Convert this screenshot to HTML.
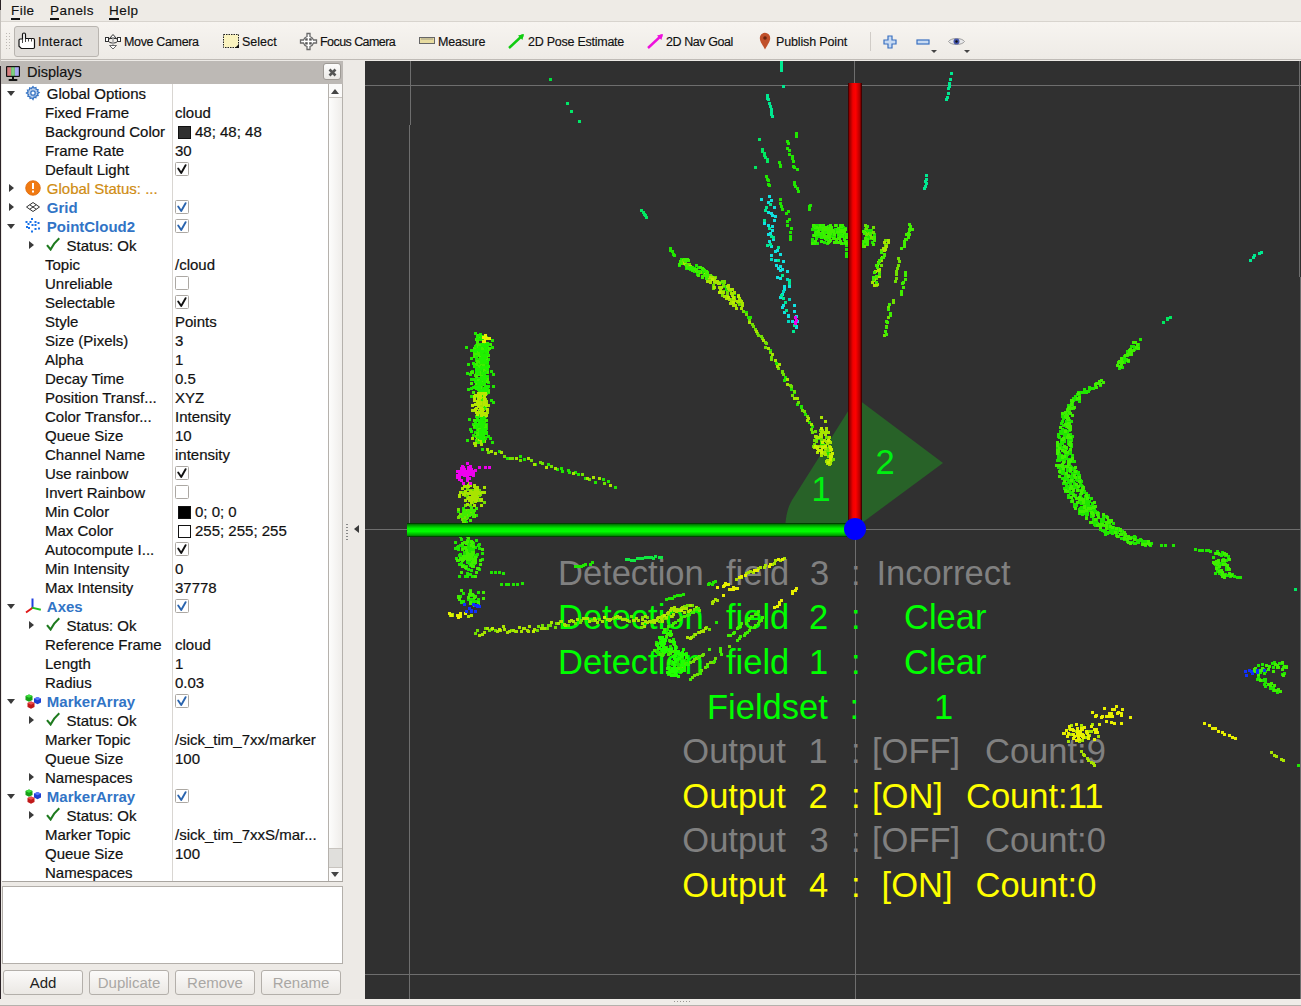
<!DOCTYPE html>
<html><head><meta charset="utf-8">
<style>
*{margin:0;padding:0;box-sizing:border-box}
html,body{width:1301px;height:1006px;overflow:hidden;background:#edeae6;font-family:"Liberation Sans",sans-serif;color:#1e1e1e;position:relative}
.abs{position:absolute}
#menubar{position:absolute;left:0;top:0;width:1301px;height:21px;background:#eeebe6}
#menubar span{position:absolute;top:3px;font-size:13.5px;letter-spacing:0.45px;color:#111;-webkit-text-stroke:0.15px #111}
#menubar u{text-decoration:none;border-bottom:2px solid #111;}
#toolbar{position:absolute;left:0;top:21px;width:1301px;height:39px;background:linear-gradient(#f7f4f0,#eeebe6);border-top:1px solid #d8d4ce;border-bottom:1px solid #bfbbb6}
.tb{position:absolute;top:13px;font-size:12.5px;color:#111;white-space:nowrap;-webkit-text-stroke:0.15px #111}
.tbi{position:absolute}
#hdr{position:absolute;left:1px;top:61px;width:342px;height:23px;background:#bdb9b5}
#tree{position:absolute;left:2px;top:84px;width:341px;height:798px;background:#fff;overflow:hidden;border-bottom:1px solid #a9a5a0}
.row{position:absolute;left:0;width:326px;height:19px}
.lbl{position:absolute;top:1px;font-size:15px;white-space:nowrap;color:#111;-webkit-text-stroke:0.2px #111}
.lbl.blue{color:#3174c6;font-weight:bold;-webkit-text-stroke:0}
.lbl.orange{color:#cf8c12;-webkit-text-stroke:0.2px #cf8c12}
.tdown{position:absolute;top:7px;width:0;height:0;border-left:4.5px solid transparent;border-right:4.5px solid transparent;border-top:5px solid #3a3a3a}
.tright{position:absolute;top:5px;width:0;height:0;border-top:4.5px solid transparent;border-bottom:4.5px solid transparent;border-left:5px solid #3a3a3a}
.ic{position:absolute;top:1px}
.val{position:absolute;left:173px;top:2px}
.cb{position:absolute;left:0;top:0;width:14px;height:14px;border:1px solid #aca8a3;background:#fff;border-radius:1.5px}
.swatch{position:absolute;left:176px;top:4px;width:13px;height:13px;border:1px solid #111}
#vline{position:absolute;left:170px;top:0;width:1px;height:798px;background:#d9d6d2}
#sb{position:absolute;left:326px;top:0;width:15px;height:797px;background:linear-gradient(90deg,#fdfdfc,#efedea);border-left:1px solid #b5b1ac;border-right:1px solid #b5b1ac}
.btn{position:absolute;top:970px;height:25px;border:1px solid #b3afaa;border-radius:3px;background:linear-gradient(#fbfaf9,#ebe8e4);font-size:15px;text-align:center;line-height:23px;color:#1e1e1e}
.btn.dis{color:#a9a7a4}
#view{position:absolute;left:365px;top:61px;width:936px;height:938px;background:#303030;overflow:hidden}
.ov{position:absolute;font-size:33px;white-space:nowrap;line-height:1}
.g{color:#00ff00}.y{color:#ffff00}.gr{color:#808080}
</style></head><body>
<div id="menubar">
 <span style="left:11px"><u>F</u>ile</span>
 <span style="left:50px"><u>P</u>anels</span>
 <span style="left:109px"><u>H</u>elp</span>
</div>
<div id="toolbar">
 <div class="abs" style="left:5px;top:10px;width:6px;height:18px;background-image:radial-gradient(circle at 1.5px 1.5px,#bdb9b4 0.8px,transparent 0.9px);background-size:3px 3px"></div>
 <div class="abs" style="left:14px;top:4px;width:85px;height:31px;border:1px solid #b9b5b0;border-radius:3px;background:#e0ddd9"></div>
 <svg class="tbi" style="left:18px;top:10px" width="18" height="18" viewBox="18 32 18 18"><path d="M22.5 39V34.5Q22.5 33 24 33Q25.5 33 25.5 34.5V38.5H28.5V38.5H31.5H33.3Q34.5 38.5 34.5 40V47.3Q34.5 48.5 33.3 48.5H21.3L19 46.3V40.2Q19 39 20.2 39Z" fill="#fff" stroke="#111" stroke-width="1.2"/><path d="M22.5 39v4M25.5 38.5v3.5M28.5 38.5v3M31.5 38.5v3" stroke="#333" stroke-width="0.9"/></svg>
 <span class="tb" style="left:38px;letter-spacing:.33px">Interact</span>
 <svg class="tbi" style="left:104px;top:11px" width="18" height="17" viewBox="104 33 18 17"><path d="M113 34.5L116.5 38.5H109.5Z" fill="#fff" stroke="#333" stroke-width="1"/><rect x="105.5" y="37.5" width="3" height="4" fill="#fff" stroke="#333"/><rect x="117.5" y="37.5" width="3" height="4" fill="#fff" stroke="#333"/><ellipse cx="113" cy="40.5" rx="4.5" ry="2.5" fill="none" stroke="#333"/><path d="M113 38v7" stroke="#aaa" stroke-width="1.5"/><path d="M109.5 45.5h7L113 49z" fill="#fff" stroke="#666"/></svg>
 <span class="tb" style="left:124px;letter-spacing:-.35px">Move Camera</span>
 <svg class="tbi" style="left:223px;top:12px" width="17" height="15" viewBox="0 0 17 15"><rect x=".5" y=".5" width="15" height="13" fill="#faf3bf" stroke="#222" stroke-dasharray="1.5 1" stroke-width="1"/><path d="M16 10v4h-4z" fill="#111"/></svg>
 <span class="tb" style="left:242px">Select</span>
 <svg class="tbi" style="left:299px;top:10px" width="19" height="19" viewBox="299 32 19 19"><path d="M307 33.5h3v3a5.5 5.5 0 0 1 3.5 3.5h3v3h-3a5.5 5.5 0 0 1-3.5 3.5v3h-3v-3a5.5 5.5 0 0 1-3.5-3.5h-3v-3h3a5.5 5.5 0 0 1 3.5-3.5z" fill="#fff" stroke="#6a6a6a" stroke-width="1.3"/><g fill="#555"><rect x="305.2" y="38.3" width="2.5" height="2.3"/><rect x="309.2" y="38.3" width="2.5" height="2.3"/><rect x="305.2" y="42.2" width="2.5" height="2.3"/><rect x="309.2" y="42.2" width="2.5" height="2.3"/></g></svg>
 <span class="tb" style="left:320px;letter-spacing:-.56px">Focus Camera</span>
 <svg class="tbi" style="left:419px;top:15px" width="16" height="8" viewBox="0 0 16 8"><rect x=".5" y=".5" width="15" height="6" fill="#e8dca0" stroke="#666"/><path d="M3 1v2M5 1v2M7 1v2M9 1v2M11 1v2M13 1v2" stroke="#777" stroke-width=".6"/></svg>
 <span class="tb" style="left:438px;letter-spacing:-.2px">Measure</span>
 <svg class="tbi" style="left:508px;top:11px" width="17" height="16" viewBox="0 0 17 16"><path d="M1 15L15 2" stroke="#11cc11" stroke-width="2.4"/><path d="M16 1l-6 1.6 4.4 4.4z" fill="#11cc11"/></svg>
 <span class="tb" style="left:528px;letter-spacing:-.25px">2D Pose Estimate</span>
 <svg class="tbi" style="left:647px;top:11px" width="17" height="16" viewBox="0 0 17 16"><path d="M1 15L15 2" stroke="#ee11dd" stroke-width="2.4"/><path d="M16 1l-6 1.6 4.4 4.4z" fill="#ee11dd"/></svg>
 <span class="tb" style="left:666px;letter-spacing:-.42px">2D Nav Goal</span>
 <svg class="tbi" style="left:759px;top:10px" width="12" height="18" viewBox="0 0 12 18"><path d="M6 17.5C3 12 .8 9.5.8 6a5.2 5.2 0 0 1 10.4 0c0 3.5-2.2 6-5.2 11.5z" fill="#c0502a"/><circle cx="6" cy="6" r="1.8" fill="#6a2510"/></svg>
 <span class="tb" style="left:776px;letter-spacing:-.14px">Publish Point</span>
 <div class="abs" style="left:870px;top:10px;width:1px;height:19px;background:#d0ccc7"></div>
 <svg class="tbi" style="left:883px;top:13px" width="14" height="14" viewBox="0 0 14 14"><path d="M5 1h4v4h4v4H9v4H5V9H1V5h4z" fill="#c9dbf2" stroke="#3a70c0" stroke-width="1.2"/></svg>
 <svg class="tbi" style="left:916px;top:17px" width="14" height="6" viewBox="0 0 14 6"><rect x="1" y="1" width="12" height="4" fill="#c9dbf2" stroke="#3a70c0" stroke-width="1.2"/></svg>
 <div class="abs" style="left:931px;top:28px;width:0;height:0;border-left:3px solid transparent;border-right:3px solid transparent;border-top:3px solid #444"></div>
 <svg class="tbi" style="left:948px;top:14px" width="17" height="11" viewBox="0 0 17 11"><path d="M.5 5.5C3 1.5 14 1.5 16.5 5.5 14 9.5 3 9.5 .5 5.5z" fill="#e8e8ea" stroke="#888" stroke-width=".8"/><circle cx="8.5" cy="5.5" r="3" fill="#4455aa"/><circle cx="8.5" cy="5.5" r="1.2" fill="#111"/></svg>
 <div class="abs" style="left:964px;top:28px;width:0;height:0;border-left:3px solid transparent;border-right:3px solid transparent;border-top:3px solid #444"></div>
</div>

<div id="hdr">
 <svg class="abs" style="left:4px;top:4px" width="16" height="17" viewBox="0 0 16 17"><rect x="1" y="1" width="14" height="11" rx="1" fill="#111"/><rect x="2.2" y="2.2" width="3.9" height="8.6" fill="#d77f80"/><rect x="6.1" y="2.2" width="3.8" height="8.6" fill="#7fcf7f"/><rect x="9.9" y="2.2" width="3.9" height="8.6" fill="#a8a8f2"/><rect x="7" y="12" width="2" height="2" fill="#111"/><rect x="3.5" y="14" width="9" height="2" rx="1" fill="#111"/></svg>
 <span class="abs" style="left:26px;top:3px;font-size:14.5px;color:#111;-webkit-text-stroke:0.15px #111">Displays</span>
 <div class="abs" style="left:322px;top:2px;width:18px;height:17px;border:1px solid #9e9a95;border-radius:3px;background:linear-gradient(#fdfdfc,#ebe9e6)"></div>
 <svg class="abs" style="left:327px;top:7px" width="9" height="9" viewBox="0 0 9 9"><path d="M1.5 1.5l6 6M7.5 1.5l-6 6" stroke="#555" stroke-width="2.6"/></svg>
</div>
<div id="tree">
<div id="vline"></div>
<div class="row" style="top:0px"><span class="tdown" style="left:5px"></span><span class="ic" style="left:23px"><svg width="16" height="16" viewBox="0 0 16 16"><g fill="none" stroke="#3a76c4" stroke-width="1.3"><path d="M8 1.5l1.1 1.6 1.8-.6.3 1.9 1.9.3-.6 1.8 1.6 1.1-1.6 1.1.6 1.8-1.9.3-.3 1.9-1.8-.6L8 14.5l-1.1-1.6-1.8.6-.3-1.9-1.9-.3.6-1.8L1.5 8l1.6-1.1-.6-1.8 1.9-.3.3-1.9 1.8.6z" fill="#b8cdea"/><circle cx="8" cy="8" r="2.2" fill="#fff"/></g></svg></span><span class="lbl" style="left:44.8px">Global Options</span></div>
<div class="row" style="top:19px"><span class="lbl" style="left:43px">Fixed Frame</span><span class="lbl" style="left:173px">cloud</span></div>
<div class="row" style="top:38px"><span class="lbl" style="left:43px">Background Color</span><span class="swatch" style="background:#303030"></span><span class="lbl" style="left:193px">48; 48; 48</span></div>
<div class="row" style="top:57px"><span class="lbl" style="left:43px">Frame Rate</span><span class="lbl" style="left:173px">30</span></div>
<div class="row" style="top:76px"><span class="lbl" style="left:43px">Default Light</span><span class="val"><span class="cb"><svg width="14" height="14" viewBox="0 0 14 14" style="position:absolute;left:-1px;top:-1px"><path d="M3.2 6.5L6.2 11L10.6 3.2" fill="none" stroke="#111" stroke-width="1.9" stroke-linecap="round" stroke-linejoin="round"/></svg></span></span></div>
<div class="row" style="top:95px"><span class="tright" style="left:7px"></span><span class="ic" style="left:23px"><svg width="16" height="16" viewBox="0 0 16 16"><circle cx="8" cy="8" r="7.3" fill="#f07a12" stroke="#e06a08" stroke-width="0.8"/><rect x="7" y="3" width="2" height="6" fill="#fff"/><rect x="7" y="10.5" width="2" height="2" fill="#fff"/></svg></span><span class="lbl orange" style="left:44.8px">Global Status: ...</span></div>
<div class="row" style="top:114px"><span class="tright" style="left:7px"></span><span class="ic" style="left:23px"><svg width="16" height="12" viewBox="0 0 16 12"><g fill="none" stroke="#333" stroke-width="1"><path d="M8 1.5L14.5 6 8 10.5 1.5 6z"/><path d="M4.75 3.75L11.25 8.25M11.25 3.75L4.75 8.25"/></g></svg></span><span class="lbl blue" style="left:44.8px">Grid</span><span class="val"><span class="cb"><svg width="14" height="14" viewBox="0 0 14 14" style="position:absolute;left:-1px;top:-1px"><path d="M3.2 6.5L6.2 11L10.6 3.2" fill="none" stroke="#2a64ae" stroke-width="1.9" stroke-linecap="round" stroke-linejoin="round"/></svg></span></span></div>
<div class="row" style="top:133px"><span class="tdown" style="left:5px"></span><span class="ic" style="left:23px"><svg width="16" height="16" viewBox="0 0 16 16"><g fill="#1a73e8"><rect x="6" y="0" width="2" height="2"/><rect x="0.5" y="3" width="2" height="2"/><rect x="4.5" y="3" width="2" height="2"/><rect x="9.5" y="3" width="2" height="2"/><rect x="12.5" y="4" width="2" height="2"/><rect x="2.5" y="5" width="2" height="2"/><rect x="6.5" y="6" width="2" height="2"/><rect x="9.5" y="6" width="2" height="2"/><rect x="1" y="8" width="2" height="2"/><rect x="3" y="9" width="2" height="2"/><rect x="9.5" y="10" width="2" height="2"/><rect x="13" y="9.5" width="2" height="2"/><rect x="6" y="12.5" width="2" height="2"/></g></svg></span><span class="lbl blue" style="left:44.8px">PointCloud2</span><span class="val"><span class="cb"><svg width="14" height="14" viewBox="0 0 14 14" style="position:absolute;left:-1px;top:-1px"><path d="M3.2 6.5L6.2 11L10.6 3.2" fill="none" stroke="#2a64ae" stroke-width="1.9" stroke-linecap="round" stroke-linejoin="round"/></svg></span></span></div>
<div class="row" style="top:152px"><span class="tright" style="left:27px"></span><span class="ic" style="left:43.5px"><svg width="14" height="14" viewBox="0 0 14 14"><path d="M1 8.2l3.6 4.3C7 8 9.5 4.5 13.3 1.3" fill="none" stroke="#1e7a1e" stroke-width="2.1"/></svg></span><span class="lbl" style="left:64.5px">Status: Ok</span></div>
<div class="row" style="top:171px"><span class="lbl" style="left:43px">Topic</span><span class="lbl" style="left:173px">/cloud</span></div>
<div class="row" style="top:190px"><span class="lbl" style="left:43px">Unreliable</span><span class="val"><span class="cb"></span></span></div>
<div class="row" style="top:209px"><span class="lbl" style="left:43px">Selectable</span><span class="val"><span class="cb"><svg width="14" height="14" viewBox="0 0 14 14" style="position:absolute;left:-1px;top:-1px"><path d="M3.2 6.5L6.2 11L10.6 3.2" fill="none" stroke="#111" stroke-width="1.9" stroke-linecap="round" stroke-linejoin="round"/></svg></span></span></div>
<div class="row" style="top:228px"><span class="lbl" style="left:43px">Style</span><span class="lbl" style="left:173px">Points</span></div>
<div class="row" style="top:247px"><span class="lbl" style="left:43px">Size (Pixels)</span><span class="lbl" style="left:173px">3</span></div>
<div class="row" style="top:266px"><span class="lbl" style="left:43px">Alpha</span><span class="lbl" style="left:173px">1</span></div>
<div class="row" style="top:285px"><span class="lbl" style="left:43px">Decay Time</span><span class="lbl" style="left:173px">0.5</span></div>
<div class="row" style="top:304px"><span class="lbl" style="left:43px">Position Transf...</span><span class="lbl" style="left:173px">XYZ</span></div>
<div class="row" style="top:323px"><span class="lbl" style="left:43px">Color Transfor...</span><span class="lbl" style="left:173px">Intensity</span></div>
<div class="row" style="top:342px"><span class="lbl" style="left:43px">Queue Size</span><span class="lbl" style="left:173px">10</span></div>
<div class="row" style="top:361px"><span class="lbl" style="left:43px">Channel Name</span><span class="lbl" style="left:173px">intensity</span></div>
<div class="row" style="top:380px"><span class="lbl" style="left:43px">Use rainbow</span><span class="val"><span class="cb"><svg width="14" height="14" viewBox="0 0 14 14" style="position:absolute;left:-1px;top:-1px"><path d="M3.2 6.5L6.2 11L10.6 3.2" fill="none" stroke="#111" stroke-width="1.9" stroke-linecap="round" stroke-linejoin="round"/></svg></span></span></div>
<div class="row" style="top:399px"><span class="lbl" style="left:43px">Invert Rainbow</span><span class="val"><span class="cb"></span></span></div>
<div class="row" style="top:418px"><span class="lbl" style="left:43px">Min Color</span><span class="swatch" style="background:#000000"></span><span class="lbl" style="left:193px">0; 0; 0</span></div>
<div class="row" style="top:437px"><span class="lbl" style="left:43px">Max Color</span><span class="swatch" style="background:#ffffff"></span><span class="lbl" style="left:193px">255; 255; 255</span></div>
<div class="row" style="top:456px"><span class="lbl" style="left:43px">Autocompute I...</span><span class="val"><span class="cb"><svg width="14" height="14" viewBox="0 0 14 14" style="position:absolute;left:-1px;top:-1px"><path d="M3.2 6.5L6.2 11L10.6 3.2" fill="none" stroke="#111" stroke-width="1.9" stroke-linecap="round" stroke-linejoin="round"/></svg></span></span></div>
<div class="row" style="top:475px"><span class="lbl" style="left:43px">Min Intensity</span><span class="lbl" style="left:173px">0</span></div>
<div class="row" style="top:494px"><span class="lbl" style="left:43px">Max Intensity</span><span class="lbl" style="left:173px">37778</span></div>
<div class="row" style="top:513px"><span class="tdown" style="left:5px"></span><span class="ic" style="left:23px"><svg width="18" height="17" viewBox="0 0 18 17"><path d="M7.5 0.5V10" stroke="#1f3fe0" stroke-width="2"/><path d="M8 9.5L1 14.5" stroke="#e01818" stroke-width="2"/><path d="M7 9.6L15.8 11.8" stroke="#20c020" stroke-width="2"/></svg></span><span class="lbl blue" style="left:44.8px">Axes</span><span class="val"><span class="cb"><svg width="14" height="14" viewBox="0 0 14 14" style="position:absolute;left:-1px;top:-1px"><path d="M3.2 6.5L6.2 11L10.6 3.2" fill="none" stroke="#2a64ae" stroke-width="1.9" stroke-linecap="round" stroke-linejoin="round"/></svg></span></span></div>
<div class="row" style="top:532px"><span class="tright" style="left:27px"></span><span class="ic" style="left:43.5px"><svg width="14" height="14" viewBox="0 0 14 14"><path d="M1 8.2l3.6 4.3C7 8 9.5 4.5 13.3 1.3" fill="none" stroke="#1e7a1e" stroke-width="2.1"/></svg></span><span class="lbl" style="left:64.5px">Status: Ok</span></div>
<div class="row" style="top:551px"><span class="lbl" style="left:43px">Reference Frame</span><span class="lbl" style="left:173px">cloud</span></div>
<div class="row" style="top:570px"><span class="lbl" style="left:43px">Length</span><span class="lbl" style="left:173px">1</span></div>
<div class="row" style="top:589px"><span class="lbl" style="left:43px">Radius</span><span class="lbl" style="left:173px">0.03</span></div>
<div class="row" style="top:608px"><span class="tdown" style="left:5px"></span><span class="ic" style="left:23px"><svg width="18" height="18" viewBox="0 0 18 18"><path d="M4 1.5l3.5 1.6v4L4 8.7 0.5 7.1v-4z" fill="#17a017"/><path d="M0.5 3.1L4 4.7l3.5-1.6L4 1.5z" fill="#3ee03e"/><path d="M12.5 4l3.5 1.6v4l-3.5 1.6L9 9.6v-4z" fill="#1f3fd0"/><path d="M9 5.6l3.5 1.6L16 5.6 12.5 4z" fill="#5a78ff"/><path d="M6 8.5l3.5 1.6v4L6 15.7l-3.5-1.6v-4z" fill="#c01818"/><path d="M2.5 10.1L6 11.7l3.5-1.6L6 8.5z" fill="#f05050"/></svg></span><span class="lbl blue" style="left:44.8px">MarkerArray</span><span class="val"><span class="cb"><svg width="14" height="14" viewBox="0 0 14 14" style="position:absolute;left:-1px;top:-1px"><path d="M3.2 6.5L6.2 11L10.6 3.2" fill="none" stroke="#2a64ae" stroke-width="1.9" stroke-linecap="round" stroke-linejoin="round"/></svg></span></span></div>
<div class="row" style="top:627px"><span class="tright" style="left:27px"></span><span class="ic" style="left:43.5px"><svg width="14" height="14" viewBox="0 0 14 14"><path d="M1 8.2l3.6 4.3C7 8 9.5 4.5 13.3 1.3" fill="none" stroke="#1e7a1e" stroke-width="2.1"/></svg></span><span class="lbl" style="left:64.5px">Status: Ok</span></div>
<div class="row" style="top:646px"><span class="lbl" style="left:43px">Marker Topic</span><span class="lbl" style="left:173px">/sick_tim_7xx/marker</span></div>
<div class="row" style="top:665px"><span class="lbl" style="left:43px">Queue Size</span><span class="lbl" style="left:173px">100</span></div>
<div class="row" style="top:684px"><span class="tright" style="left:27px"></span><span class="lbl" style="left:43px">Namespaces</span></div>
<div class="row" style="top:703px"><span class="tdown" style="left:5px"></span><span class="ic" style="left:23px"><svg width="18" height="18" viewBox="0 0 18 18"><path d="M4 1.5l3.5 1.6v4L4 8.7 0.5 7.1v-4z" fill="#17a017"/><path d="M0.5 3.1L4 4.7l3.5-1.6L4 1.5z" fill="#3ee03e"/><path d="M12.5 4l3.5 1.6v4l-3.5 1.6L9 9.6v-4z" fill="#1f3fd0"/><path d="M9 5.6l3.5 1.6L16 5.6 12.5 4z" fill="#5a78ff"/><path d="M6 8.5l3.5 1.6v4L6 15.7l-3.5-1.6v-4z" fill="#c01818"/><path d="M2.5 10.1L6 11.7l3.5-1.6L6 8.5z" fill="#f05050"/></svg></span><span class="lbl blue" style="left:44.8px">MarkerArray</span><span class="val"><span class="cb"><svg width="14" height="14" viewBox="0 0 14 14" style="position:absolute;left:-1px;top:-1px"><path d="M3.2 6.5L6.2 11L10.6 3.2" fill="none" stroke="#2a64ae" stroke-width="1.9" stroke-linecap="round" stroke-linejoin="round"/></svg></span></span></div>
<div class="row" style="top:722px"><span class="tright" style="left:27px"></span><span class="ic" style="left:43.5px"><svg width="14" height="14" viewBox="0 0 14 14"><path d="M1 8.2l3.6 4.3C7 8 9.5 4.5 13.3 1.3" fill="none" stroke="#1e7a1e" stroke-width="2.1"/></svg></span><span class="lbl" style="left:64.5px">Status: Ok</span></div>
<div class="row" style="top:741px"><span class="lbl" style="left:43px">Marker Topic</span><span class="lbl" style="left:173px">/sick_tim_7xxS/mar...</span></div>
<div class="row" style="top:760px"><span class="lbl" style="left:43px">Queue Size</span><span class="lbl" style="left:173px">100</span></div>
<div class="row" style="top:779px"><span class="lbl" style="left:43px">Namespaces</span></div>
<div id="sb">
 <div class="abs" style="left:0;top:0;width:13px;height:14px;background:#fbfaf9;border-bottom:1px solid #c8c4bf"></div>
 <div class="abs" style="left:2px;top:5px;width:0;height:0;border-left:4.5px solid transparent;border-right:4.5px solid transparent;border-bottom:5px solid #444"></div>
 <div class="abs" style="left:0;top:764px;width:13px;height:19px;background:#e0dfdc;border-top:1px solid #c8c4bf"></div>
 <div class="abs" style="left:0;top:783px;width:13px;height:14px;background:#fbfaf9;border-top:1px solid #c8c4bf"></div>
 <div class="abs" style="left:2px;top:788px;width:0;height:0;border-left:4.5px solid transparent;border-right:4.5px solid transparent;border-top:5px solid #444"></div>
</div>
</div>
<div class="abs" style="left:171px;top:882px;width:12px;height:2px;background-image:radial-gradient(#aaa 0.6px,transparent 0.7px);background-size:2px 2px"></div>
<div class="abs" style="left:2px;top:886px;width:341px;height:78px;background:#fff;border:1px solid #b3afaa"></div>
<div class="btn" style="left:3px;width:80px">Add</div>
<div class="btn dis" style="left:89px;width:80px">Duplicate</div>
<div class="btn dis" style="left:175px;width:80px">Remove</div>
<div class="btn dis" style="left:261px;width:80px">Rename</div>

<div class="abs" style="left:346px;top:523px;width:2px;height:17px;background-image:radial-gradient(#888 0.6px,transparent 0.7px);background-size:2px 3px"></div>
<div class="abs" style="left:354px;top:525px;width:0;height:0;border-top:4.5px solid transparent;border-bottom:4.5px solid transparent;border-right:5px solid #3a3a3a"></div>
<div class="abs" style="left:0;top:66px;width:1px;height:940px;background:#2a2226"></div><div class="abs" style="left:0;top:0;width:1px;height:10px;background:#2a2226"></div><div class="abs" style="left:0;top:10px;width:1px;height:56px;background:#c4c0bb"></div>

<div id="view">
<svg width="936" height="938" style="position:absolute;left:0;top:0">
 <g fill="#6e6e6e">
  <rect x="45" y="0" width="1" height="64"/><rect x="44" y="64" width="1" height="874"/>
  <rect x="489" y="0" width="1" height="30"/><rect x="490" y="30" width="1" height="908"/>
  <rect x="934" y="0" width="1" height="216"/><rect x="935" y="216" width="1" height="722"/>
  <rect x="0" y="24" width="936" height="1"/>
  <rect x="0" y="468" width="936" height="1"/>
  <rect x="0" y="913" width="936" height="1"/>
 </g>
<defs>
  <linearGradient id="rg" x1="0" x2="1" y1="0" y2="0"><stop offset="0" stop-color="#200000"/><stop offset="0.1" stop-color="#900000"/><stop offset="0.35" stop-color="#f00000"/><stop offset="0.55" stop-color="#ff0000"/><stop offset="0.85" stop-color="#b00000"/><stop offset="1" stop-color="#200000"/></linearGradient>
  <linearGradient id="gg" x1="0" x2="0" y1="0" y2="1"><stop offset="0" stop-color="#002000"/><stop offset="0.12" stop-color="#008800"/><stop offset="0.38" stop-color="#00f000"/><stop offset="0.6" stop-color="#00ff00"/><stop offset="0.88" stop-color="#00a000"/><stop offset="1" stop-color="#002000"/></linearGradient>
 </defs>
 <g transform="translate(-365,-61)">
  <path d="M855 397L943 463L855 528Z" fill="#286228"/>
  <path d="M857 397L794 497C789 504 786.5 512 785.5 523L857 523Z" fill="#286228"/>
  <g font-family="Liberation Sans" font-size="34.5" fill="#00f010">
   <text x="811.6" y="500.8">1</text><text x="875.5" y="473.8">2</text>
  </g>
  <g font-family="Liberation Sans" font-size="34.5">
   <g fill="#808080"><text x="558" y="585.2">Detection</text><text x="726" y="585.2">field</text><text x="810" y="585.2">3</text><text x="851" y="585.2">:</text><text x="876.4" y="585.2">Incorrect</text></g>
   <g fill="#00ff00"><text x="558" y="629.2">Detection</text><text x="726" y="629.2">field</text><text x="809" y="629.2">2</text><text x="851" y="629.2">:</text><text x="904" y="629.2">Clear</text></g>
   <g fill="#00ff00"><text x="558" y="673.6">Detection</text><text x="726" y="673.6">field</text><text x="809" y="673.6">1</text><text x="851" y="673.6">:</text><text x="904" y="673.6">Clear</text></g>
   <g fill="#00ff00"><text x="707" y="718.5">Fieldset</text><text x="849.6" y="718.5">:</text><text x="934" y="718.5">1</text></g>
   <g fill="#808080"><text x="682.3" y="763">Output</text><text x="808.6" y="763">1</text><text x="851" y="763">:</text><text x="872" y="763">[OFF]</text><text x="985" y="763">Count:9</text></g>
   <g fill="#ffff00"><text x="682.3" y="807.7">Output</text><text x="808.6" y="807.7">2</text><text x="851" y="807.7">:</text><text x="872" y="807.7">[ON]</text><text x="966" y="807.7">Count:11</text></g>
   <g fill="#808080"><text x="682.3" y="852.2">Output</text><text x="809.6" y="852.2">3</text><text x="851" y="852.2">:</text><text x="872" y="852.2">[OFF]</text><text x="985" y="852.2">Count:0</text></g>
   <g fill="#ffff00"><text x="682.3" y="896.9">Output</text><text x="809" y="896.9">4</text><text x="851" y="896.9">:</text><text x="881.6" y="896.9">[ON]</text><text x="975.5" y="896.9">Count:0</text></g>
  </g>
 </g>
 <path fill="#00e040" d="M184 17h3v3h-3z"/>
<path fill="#00e868" d="M201 41h3v3h-3zM205 49h3v3h-3zM213 59h3v3h-3z"/>
<path fill="#00e860" d="M275 148h3v3h-3zM277 150h3v3h-3zM278 152h3v3h-3zM279 153h3v3h-3zM280 155h3v3h-3zM393 77h3v3h-3zM389 105h3v3h-3zM396 87h3v3h-3zM396 89h3v3h-3zM398 91h3v3h-3zM398 93h3v3h-3zM399 95h3v3h-3zM401 97h3v3h-3zM401 99h3v3h-3zM797 260h3v3h-3zM801 257h3v3h-3zM801 256h3v3h-3zM804 255h3v3h-3zM929 527h3v3h-3z"/>
<path fill="#20e600" d="M304 186h3v3h-3zM304 188h3v3h-3zM306 189h3v3h-3zM307 192h3v3h-3zM308 193h3v3h-3zM326 205h3v3h-3zM328 206h3v3h-3zM332 209h3v3h-3zM337 210h3v3h-3zM341 214h3v3h-3zM345 214h3v3h-3zM355 220h3v3h-3zM357 223h3v3h-3zM358 224h3v3h-3zM360 227h3v3h-3zM362 227h3v3h-3zM368 231h3v3h-3zM380 250h3v3h-3zM382 255h3v3h-3zM384 255h3v3h-3zM404 288h3v3h-3zM410 301h3v3h-3zM419 315h3v3h-3zM418 318h3v3h-3zM425 327h3v3h-3zM428 330h3v3h-3zM431 342h3v3h-3zM435 344h3v3h-3zM435 345h3v3h-3zM439 352h3v3h-3zM443 360h3v3h-3zM446 364h3v3h-3zM453 376h3v3h-3zM455 381h3v3h-3zM457 382h3v3h-3zM462 389h3v3h-3zM461 392h3v3h-3zM463 394h3v3h-3zM315 197h3v3h-3zM313 203h3v3h-3zM318 199h3v3h-3zM317 200h3v3h-3zM319 202h3v3h-3zM320 204h3v3h-3zM320 206h3v3h-3zM323 205h3v3h-3zM323 206h3v3h-3zM324 207h3v3h-3zM325 206h3v3h-3zM326 206h3v3h-3zM327 206h3v3h-3zM330 203h3v3h-3zM329 207h3v3h-3zM328 209h3v3h-3zM330 209h3v3h-3zM332 205h3v3h-3zM331 212h3v3h-3zM334 209h3v3h-3zM336 209h3v3h-3zM341 210h3v3h-3zM341 215h3v3h-3zM430 71h3v3h-3zM430 72h3v3h-3zM430 74h3v3h-3zM421 79h3v3h-3zM422 81h3v3h-3zM421 86h3v3h-3zM423 88h3v3h-3zM423 92h3v3h-3zM426 94h3v3h-3zM426 96h3v3h-3zM427 99h3v3h-3zM427 104h3v3h-3zM428 105h3v3h-3zM431 107h3v3h-3zM413 100h3v3h-3zM414 103h3v3h-3zM414 104h3v3h-3zM400 114h3v3h-3zM401 117h3v3h-3zM402 118h3v3h-3zM402 122h3v3h-3zM403 123h3v3h-3zM428 120h3v3h-3zM428 122h3v3h-3zM429 124h3v3h-3zM431 126h3v3h-3zM432 129h3v3h-3zM444 143h3v3h-3zM443 144h3v3h-3zM443 147h3v3h-3zM414 137h3v3h-3zM414 141h3v3h-3zM415 144h3v3h-3zM416 147h3v3h-3zM422 149h3v3h-3zM420 151h3v3h-3zM423 157h3v3h-3zM421 159h3v3h-3zM421 163h3v3h-3zM425 166h3v3h-3zM424 170h3v3h-3zM424 174h3v3h-3zM424 177h3v3h-3zM458 175h3v3h-3zM462 177h3v3h-3zM473 173h3v3h-3zM467 168h3v3h-3zM464 172h3v3h-3zM467 175h3v3h-3zM462 164h3v3h-3zM454 174h3v3h-3zM453 164h3v3h-3zM458 173h3v3h-3zM475 167h3v3h-3zM476 170h3v3h-3zM451 174h3v3h-3zM480 179h3v3h-3zM465 167h3v3h-3zM447 173h3v3h-3zM479 175h3v3h-3zM453 163h3v3h-3zM472 174h3v3h-3zM449 169h3v3h-3zM478 167h3v3h-3zM477 165h3v3h-3zM448 181h3v3h-3zM453 164h3v3h-3zM463 169h3v3h-3zM478 173h3v3h-3zM455 166h3v3h-3zM446 178h3v3h-3zM450 163h3v3h-3zM452 171h3v3h-3zM474 169h3v3h-3zM449 170h3v3h-3zM450 176h3v3h-3zM476 181h3v3h-3zM452 164h3v3h-3zM466 172h3v3h-3zM447 165h3v3h-3zM476 165h3v3h-3zM457 167h3v3h-3zM461 181h3v3h-3zM469 167h3v3h-3zM479 180h3v3h-3zM450 165h3v3h-3zM471 168h3v3h-3zM470 167h3v3h-3zM465 169h3v3h-3zM467 171h3v3h-3zM451 181h3v3h-3zM464 178h3v3h-3zM478 170h3v3h-3zM450 166h3v3h-3zM478 181h3v3h-3zM449 179h3v3h-3zM456 169h3v3h-3zM464 174h3v3h-3zM446 177h3v3h-3zM461 166h3v3h-3zM479 166h3v3h-3zM446 167h3v3h-3zM469 170h3v3h-3zM448 167h3v3h-3zM476 181h3v3h-3zM461 174h3v3h-3zM463 165h3v3h-3zM458 180h3v3h-3zM468 174h3v3h-3zM460 177h3v3h-3zM470 163h3v3h-3zM480 173h3v3h-3zM447 164h3v3h-3zM446 177h3v3h-3zM500 173h3v3h-3zM496 182h3v3h-3zM501 168h3v3h-3zM501 171h3v3h-3zM508 172h3v3h-3zM499 167h3v3h-3zM500 167h3v3h-3zM504 176h3v3h-3zM502 168h3v3h-3zM497 179h3v3h-3zM507 176h3v3h-3zM503 169h3v3h-3zM504 176h3v3h-3zM499 181h3v3h-3zM500 182h3v3h-3zM505 168h3v3h-3zM507 165h3v3h-3zM502 174h3v3h-3zM506 180h3v3h-3zM481 182h3v3h-3zM480 183h3v3h-3zM480 187h3v3h-3zM480 191h3v3h-3zM480 194h3v3h-3zM753 306h3v3h-3zM756 305h3v3h-3zM757 300h3v3h-3zM758 300h3v3h-3zM759 298h3v3h-3zM757 297h3v3h-3zM760 297h3v3h-3zM762 299h3v3h-3zM758 294h3v3h-3zM761 293h3v3h-3zM762 292h3v3h-3zM761 289h3v3h-3zM766 288h3v3h-3zM768 287h3v3h-3zM765 284h3v3h-3zM767 284h3v3h-3zM771 286h3v3h-3zM772 285h3v3h-3zM772 282h3v3h-3zM774 277h3v3h-3zM734 323h3v3h-3zM730 321h3v3h-3zM729 325h3v3h-3zM727 326h3v3h-3zM727 326h3v3h-3zM726 326h3v3h-3zM725 326h3v3h-3zM723 325h3v3h-3zM723 327h3v3h-3zM722 329h3v3h-3zM721 329h3v3h-3zM718 327h3v3h-3zM720 330h3v3h-3zM718 330h3v3h-3zM717 330h3v3h-3zM715 330h3v3h-3zM715 330h3v3h-3zM712 330h3v3h-3zM713 332h3v3h-3zM713 333h3v3h-3zM711 332h3v3h-3zM709 334h3v3h-3zM712 337h3v3h-3zM713 339h3v3h-3zM713 339h3v3h-3zM709 337h3v3h-3zM707 336h3v3h-3zM707 338h3v3h-3zM706 338h3v3h-3zM706 340h3v3h-3zM706 341h3v3h-3zM705 341h3v3h-3zM706 343h3v3h-3zM707 346h3v3h-3zM702 343h3v3h-3zM703 346h3v3h-3zM703 348h3v3h-3zM701 347h3v3h-3zM703 350h3v3h-3zM701 350h3v3h-3zM701 351h3v3h-3zM696 351h3v3h-3zM697 352h3v3h-3zM696 353h3v3h-3zM696 354h3v3h-3zM697 356h3v3h-3zM701 357h3v3h-3zM703 358h3v3h-3zM705 359h3v3h-3zM705 359h3v3h-3zM700 359h3v3h-3zM701 359h3v3h-3zM696 359h3v3h-3zM703 360h3v3h-3zM695 361h3v3h-3zM702 363h3v3h-3zM697 363h3v3h-3zM700 364h3v3h-3zM703 365h3v3h-3zM703 367h3v3h-3zM704 367h3v3h-3zM703 368h3v3h-3zM696 367h3v3h-3zM703 368h3v3h-3zM699 368h3v3h-3zM700 369h3v3h-3zM694 369h3v3h-3zM699 370h3v3h-3zM696 370h3v3h-3zM701 371h3v3h-3zM694 371h3v3h-3zM701 371h3v3h-3zM696 371h3v3h-3zM704 372h3v3h-3zM700 372h3v3h-3zM692 372h3v3h-3zM698 373h3v3h-3zM692 373h3v3h-3zM705 374h3v3h-3zM692 374h3v3h-3zM706 374h3v3h-3zM701 375h3v3h-3zM693 375h3v3h-3zM705 376h3v3h-3zM698 376h3v3h-3zM704 377h3v3h-3zM695 377h3v3h-3zM696 377h3v3h-3zM705 378h3v3h-3zM702 378h3v3h-3zM702 378h3v3h-3zM702 379h3v3h-3zM703 379h3v3h-3zM698 379h3v3h-3zM695 380h3v3h-3zM696 381h3v3h-3zM704 381h3v3h-3zM702 381h3v3h-3zM693 382h3v3h-3zM705 382h3v3h-3zM694 382h3v3h-3zM694 383h3v3h-3zM691 384h3v3h-3zM705 384h3v3h-3zM696 385h3v3h-3zM691 385h3v3h-3zM698 385h3v3h-3zM693 386h3v3h-3zM700 386h3v3h-3zM691 387h3v3h-3zM697 387h3v3h-3zM697 388h3v3h-3zM703 389h3v3h-3zM698 389h3v3h-3zM704 390h3v3h-3zM699 391h3v3h-3zM704 391h3v3h-3zM693 391h3v3h-3zM692 392h3v3h-3zM701 392h3v3h-3zM693 392h3v3h-3zM706 393h3v3h-3zM699 393h3v3h-3zM695 393h3v3h-3zM692 394h3v3h-3zM700 395h3v3h-3zM700 395h3v3h-3zM706 395h3v3h-3zM699 396h3v3h-3zM694 396h3v3h-3zM692 397h3v3h-3zM703 397h3v3h-3zM696 397h3v3h-3zM706 398h3v3h-3zM693 398h3v3h-3zM691 398h3v3h-3zM702 398h3v3h-3zM705 399h3v3h-3zM703 399h3v3h-3zM698 399h3v3h-3zM696 403h3v3h-3zM693 404h3v3h-3zM708 399h3v3h-3zM692 405h3v3h-3zM703 402h3v3h-3zM697 404h3v3h-3zM702 403h3v3h-3zM696 406h3v3h-3zM694 407h3v3h-3zM702 405h3v3h-3zM694 407h3v3h-3zM694 408h3v3h-3zM704 404h3v3h-3zM697 408h3v3h-3zM705 405h3v3h-3zM701 407h3v3h-3zM694 410h3v3h-3zM701 408h3v3h-3zM702 407h3v3h-3zM696 410h3v3h-3zM708 406h3v3h-3zM707 407h3v3h-3zM696 411h3v3h-3zM697 411h3v3h-3zM704 409h3v3h-3zM700 411h3v3h-3zM693 414h3v3h-3zM700 412h3v3h-3zM709 409h3v3h-3zM710 409h3v3h-3zM708 410h3v3h-3zM707 411h3v3h-3zM706 411h3v3h-3zM699 414h3v3h-3zM712 410h3v3h-3zM702 413h3v3h-3zM711 411h3v3h-3zM696 416h3v3h-3zM706 413h3v3h-3zM704 414h3v3h-3zM704 414h3v3h-3zM701 416h3v3h-3zM698 417h3v3h-3zM700 417h3v3h-3zM713 413h3v3h-3zM706 415h3v3h-3zM712 413h3v3h-3zM705 417h3v3h-3zM712 415h3v3h-3zM703 418h3v3h-3zM706 417h3v3h-3zM702 419h3v3h-3zM697 421h3v3h-3zM710 417h3v3h-3zM700 421h3v3h-3zM702 420h3v3h-3zM711 418h3v3h-3zM707 419h3v3h-3zM704 420h3v3h-3zM712 418h3v3h-3zM713 418h3v3h-3zM700 423h3v3h-3zM714 418h3v3h-3zM704 422h3v3h-3zM714 419h3v3h-3zM708 421h3v3h-3zM715 419h3v3h-3zM702 424h3v3h-3zM698 426h3v3h-3zM709 422h3v3h-3zM700 425h3v3h-3zM714 421h3v3h-3zM705 425h3v3h-3zM708 424h3v3h-3zM699 427h3v3h-3zM701 427h3v3h-3zM709 425h3v3h-3zM699 429h3v3h-3zM716 424h3v3h-3zM703 429h3v3h-3zM707 428h3v3h-3zM711 427h3v3h-3zM715 423h3v3h-3zM702 433h3v3h-3zM706 430h3v3h-3zM704 431h3v3h-3zM705 431h3v3h-3zM706 431h3v3h-3zM716 425h3v3h-3zM702 435h3v3h-3zM707 432h3v3h-3zM713 428h3v3h-3zM709 433h3v3h-3zM716 429h3v3h-3zM709 434h3v3h-3zM717 428h3v3h-3zM718 429h3v3h-3zM714 432h3v3h-3zM714 432h3v3h-3zM717 430h3v3h-3zM706 438h3v3h-3zM705 439h3v3h-3zM713 435h3v3h-3zM720 431h3v3h-3zM714 435h3v3h-3zM720 432h3v3h-3zM715 436h3v3h-3zM719 434h3v3h-3zM714 438h3v3h-3zM708 442h3v3h-3zM722 433h3v3h-3zM712 440h3v3h-3zM710 443h3v3h-3zM720 436h3v3h-3zM722 435h3v3h-3zM708 444h3v3h-3zM715 441h3v3h-3zM716 440h3v3h-3zM709 446h3v3h-3zM719 439h3v3h-3zM719 440h3v3h-3zM725 436h3v3h-3zM718 441h3v3h-3zM721 439h3v3h-3zM719 441h3v3h-3zM720 440h3v3h-3zM723 439h3v3h-3zM722 440h3v3h-3zM723 439h3v3h-3zM715 445h3v3h-3zM713 447h3v3h-3zM714 446h3v3h-3zM719 444h3v3h-3zM716 446h3v3h-3zM713 449h3v3h-3zM722 443h3v3h-3zM726 441h3v3h-3zM720 445h3v3h-3zM717 448h3v3h-3zM723 444h3v3h-3zM713 451h3v3h-3zM726 443h3v3h-3zM723 445h3v3h-3zM725 445h3v3h-3zM722 448h3v3h-3zM718 451h3v3h-3zM726 446h3v3h-3zM716 452h3v3h-3zM721 450h3v3h-3zM724 448h3v3h-3zM720 453h3v3h-3zM727 444h3v3h-3zM721 452h3v3h-3zM727 445h3v3h-3zM725 448h3v3h-3zM728 446h3v3h-3zM728 447h3v3h-3zM725 451h3v3h-3zM725 452h3v3h-3zM727 450h3v3h-3zM725 453h3v3h-3zM726 452h3v3h-3zM725 454h3v3h-3zM729 449h3v3h-3zM726 454h3v3h-3zM730 450h3v3h-3zM730 450h3v3h-3zM731 450h3v3h-3zM727 457h3v3h-3zM732 451h3v3h-3zM732 451h3v3h-3zM727 460h3v3h-3zM732 453h3v3h-3zM728 459h3v3h-3zM728 460h3v3h-3zM730 458h3v3h-3zM728 462h3v3h-3zM728 462h3v3h-3zM730 459h3v3h-3zM729 461h3v3h-3zM729 463h3v3h-3zM731 461h3v3h-3zM737 453h3v3h-3zM735 457h3v3h-3zM731 462h3v3h-3zM737 456h3v3h-3zM735 459h3v3h-3zM733 463h3v3h-3zM736 460h3v3h-3zM740 454h3v3h-3zM734 462h3v3h-3zM737 459h3v3h-3zM734 467h3v3h-3zM737 463h3v3h-3zM737 463h3v3h-3zM741 461h3v3h-3zM743 458h3v3h-3zM736 468h3v3h-3zM741 464h3v3h-3zM743 462h3v3h-3zM738 469h3v3h-3zM743 463h3v3h-3zM739 469h3v3h-3zM743 464h3v3h-3zM747 461h3v3h-3zM743 466h3v3h-3zM739 472h3v3h-3zM744 466h3v3h-3zM741 470h3v3h-3zM741 471h3v3h-3zM744 468h3v3h-3zM747 465h3v3h-3zM744 470h3v3h-3zM746 468h3v3h-3zM746 469h3v3h-3zM746 471h3v3h-3zM748 468h3v3h-3zM748 469h3v3h-3zM750 469h3v3h-3zM752 466h3v3h-3zM752 467h3v3h-3zM751 470h3v3h-3zM750 473h3v3h-3zM752 474h3v3h-3zM755 470h3v3h-3zM756 469h3v3h-3zM756 472h3v3h-3zM755 476h3v3h-3zM758 471h3v3h-3zM758 473h3v3h-3zM758 477h3v3h-3zM758 477h3v3h-3zM760 476h3v3h-3zM760 476h3v3h-3zM760 477h3v3h-3zM763 475h3v3h-3zM761 479h3v3h-3zM763 480h3v3h-3zM766 475h3v3h-3zM764 480h3v3h-3zM768 474h3v3h-3zM766 480h3v3h-3zM769 475h3v3h-3zM768 481h3v3h-3zM769 481h3v3h-3zM771 478h3v3h-3zM772 479h3v3h-3zM772 480h3v3h-3zM774 477h3v3h-3zM774 477h3v3h-3zM775 478h3v3h-3zM776 480h3v3h-3zM778 479h3v3h-3zM779 483h3v3h-3zM781 479h3v3h-3zM784 483h3v3h-3zM785 481h3v3h-3zM795 483h3v3h-3zM799 483h3v3h-3zM807 483h3v3h-3zM829 487h3v3h-3zM833 488h3v3h-3zM836 488h3v3h-3zM840 488h3v3h-3zM842 488h3v3h-3zM844 489h3v3h-3zM853 501h3v3h-3zM860 505h3v3h-3zM866 512h3v3h-3zM856 511h3v3h-3zM861 507h3v3h-3zM859 512h3v3h-3zM853 511h3v3h-3zM856 490h3v3h-3zM850 504h3v3h-3zM862 497h3v3h-3zM853 492h3v3h-3zM851 489h3v3h-3zM851 500h3v3h-3zM858 492h3v3h-3zM856 514h3v3h-3zM857 512h3v3h-3zM852 507h3v3h-3zM855 493h3v3h-3zM850 502h3v3h-3zM862 494h3v3h-3zM861 513h3v3h-3zM860 507h3v3h-3zM847 495h3v3h-3zM857 497h3v3h-3zM849 511h3v3h-3zM860 498h3v3h-3zM862 495h3v3h-3zM855 512h3v3h-3zM851 491h3v3h-3zM849 491h3v3h-3zM849 502h3v3h-3zM858 499h3v3h-3zM862 494h3v3h-3zM851 509h3v3h-3zM855 501h3v3h-3zM850 506h3v3h-3zM855 502h3v3h-3zM859 493h3v3h-3zM851 509h3v3h-3zM864 514h3v3h-3zM868 514h3v3h-3zM871 515h3v3h-3zM874 515h3v3h-3zM115 320h3v3h-3zM115 276h3v3h-3zM108 317h3v3h-3zM113 297h3v3h-3zM115 309h3v3h-3zM118 367h3v3h-3zM110 283h3v3h-3zM117 286h3v3h-3zM114 277h3v3h-3zM107 362h3v3h-3zM108 365h3v3h-3zM116 320h3v3h-3zM113 305h3v3h-3zM115 369h3v3h-3zM116 355h3v3h-3zM121 302h3v3h-3zM117 362h3v3h-3zM119 307h3v3h-3zM115 311h3v3h-3zM119 376h3v3h-3zM112 320h3v3h-3zM117 289h3v3h-3zM110 295h3v3h-3zM113 305h3v3h-3zM111 324h3v3h-3zM112 299h3v3h-3zM112 307h3v3h-3zM120 292h3v3h-3zM120 297h3v3h-3zM111 364h3v3h-3zM113 328h3v3h-3zM112 302h3v3h-3zM119 292h3v3h-3zM114 365h3v3h-3zM120 310h3v3h-3zM117 374h3v3h-3zM114 299h3v3h-3zM115 362h3v3h-3zM119 375h3v3h-3zM115 320h3v3h-3zM107 325h3v3h-3zM109 293h3v3h-3zM114 369h3v3h-3zM118 353h3v3h-3zM115 326h3v3h-3zM114 370h3v3h-3zM117 294h3v3h-3zM120 301h3v3h-3zM116 318h3v3h-3zM106 309h3v3h-3zM115 323h3v3h-3zM116 295h3v3h-3zM111 273h3v3h-3zM111 325h3v3h-3zM109 370h3v3h-3zM115 330h3v3h-3zM115 361h3v3h-3zM113 354h3v3h-3zM117 301h3v3h-3zM118 291h3v3h-3zM119 285h3v3h-3zM117 281h3v3h-3zM120 362h3v3h-3zM114 305h3v3h-3zM111 276h3v3h-3zM111 317h3v3h-3zM113 316h3v3h-3zM110 307h3v3h-3zM119 326h3v3h-3zM119 304h3v3h-3zM109 324h3v3h-3zM119 282h3v3h-3zM116 314h3v3h-3zM114 324h3v3h-3zM121 307h3v3h-3zM121 291h3v3h-3zM121 318h3v3h-3zM114 347h3v3h-3zM118 354h3v3h-3zM117 308h3v3h-3zM115 290h3v3h-3zM118 361h3v3h-3zM122 329h3v3h-3zM108 290h3v3h-3zM113 282h3v3h-3zM118 280h3v3h-3zM110 314h3v3h-3zM122 287h3v3h-3zM113 318h3v3h-3zM110 303h3v3h-3zM115 320h3v3h-3zM118 354h3v3h-3zM120 363h3v3h-3zM117 372h3v3h-3zM122 297h3v3h-3zM121 324h3v3h-3zM118 357h3v3h-3zM117 315h3v3h-3zM110 308h3v3h-3zM113 354h3v3h-3zM107 373h3v3h-3zM121 285h3v3h-3zM120 283h3v3h-3zM110 298h3v3h-3zM110 311h3v3h-3zM117 365h3v3h-3zM116 362h3v3h-3zM120 328h3v3h-3zM116 297h3v3h-3zM113 362h3v3h-3zM122 330h3v3h-3zM116 319h3v3h-3zM117 328h3v3h-3zM112 304h3v3h-3zM117 374h3v3h-3zM114 364h3v3h-3zM116 274h3v3h-3zM123 286h3v3h-3zM120 309h3v3h-3zM119 308h3v3h-3zM114 369h3v3h-3zM115 310h3v3h-3zM111 367h3v3h-3zM110 283h3v3h-3zM121 299h3v3h-3zM118 370h3v3h-3zM113 324h3v3h-3zM120 366h3v3h-3zM113 329h3v3h-3zM118 305h3v3h-3zM119 287h3v3h-3zM120 306h3v3h-3zM111 334h3v3h-3zM110 370h3v3h-3zM118 369h3v3h-3zM113 276h3v3h-3zM114 302h3v3h-3zM115 362h3v3h-3zM120 353h3v3h-3zM114 272h3v3h-3zM126 278h3v3h-3zM105 317h3v3h-3zM122 374h3v3h-3zM101 311h3v3h-3zM127 324h3v3h-3zM125 338h3v3h-3zM126 380h3v3h-3zM100 285h3v3h-3zM105 334h3v3h-3zM101 378h3v3h-3zM122 320h3v3h-3zM125 309h3v3h-3zM103 357h3v3h-3zM102 327h3v3h-3zM105 288h3v3h-3zM104 367h3v3h-3zM102 302h3v3h-3zM127 312h3v3h-3zM127 340h3v3h-3zM104 312h3v3h-3zM105 296h3v3h-3zM105 326h3v3h-3zM124 376h3v3h-3zM105 334h3v3h-3zM126 285h3v3h-3zM109 271h3v3h-3zM116 387h3v3h-3zM133 389h3v3h-3zM141 396h3v3h-3zM154 394h3v3h-3zM158 397h3v3h-3zM169 402h3v3h-3zM182 402h3v3h-3zM191 407h3v3h-3zM195 406h3v3h-3zM196 409h3v3h-3zM202 408h3v3h-3zM203 410h3v3h-3zM209 410h3v3h-3zM212 412h3v3h-3zM219 416h3v3h-3zM229 420h3v3h-3zM237 417h3v3h-3zM242 419h3v3h-3zM249 425h3v3h-3zM102 451h3v3h-3zM98 450h3v3h-3zM99 457h3v3h-3zM110 453h3v3h-3zM105 447h3v3h-3zM100 456h3v3h-3zM97 448h3v3h-3zM100 460h3v3h-3zM92 449h3v3h-3zM105 449h3v3h-3zM97 446h3v3h-3zM101 454h3v3h-3zM100 450h3v3h-3zM107 451h3v3h-3zM109 495h3v3h-3zM94 495h3v3h-3zM93 514h3v3h-3zM98 490h3v3h-3zM100 506h3v3h-3zM103 484h3v3h-3zM108 493h3v3h-3zM107 488h3v3h-3zM98 494h3v3h-3zM94 495h3v3h-3zM109 493h3v3h-3zM97 486h3v3h-3zM111 492h3v3h-3zM108 501h3v3h-3zM95 501h3v3h-3zM104 503h3v3h-3zM99 505h3v3h-3zM93 502h3v3h-3zM104 500h3v3h-3zM92 498h3v3h-3zM101 474h3v3h-3zM104 497h3v3h-3zM106 486h3v3h-3zM116 497h3v3h-3zM116 491h3v3h-3zM102 499h3v3h-3zM107 481h3v3h-3zM105 508h3v3h-3zM104 502h3v3h-3zM103 499h3v3h-3zM97 503h3v3h-3zM102 491h3v3h-3zM109 485h3v3h-3zM101 500h3v3h-3zM98 492h3v3h-3zM102 488h3v3h-3zM106 495h3v3h-3zM101 494h3v3h-3zM106 514h3v3h-3zM94 483h3v3h-3zM100 494h3v3h-3zM103 494h3v3h-3zM99 493h3v3h-3zM108 499h3v3h-3zM89 486h3v3h-3zM95 496h3v3h-3zM113 486h3v3h-3zM105 489h3v3h-3zM100 485h3v3h-3zM104 503h3v3h-3zM94 474h3v3h-3zM104 490h3v3h-3zM100 493h3v3h-3zM103 486h3v3h-3zM90 496h3v3h-3zM101 478h3v3h-3zM103 489h3v3h-3zM106 494h3v3h-3zM109 500h3v3h-3zM102 482h3v3h-3zM101 496h3v3h-3zM91 485h3v3h-3zM89 480h3v3h-3zM104 512h3v3h-3zM96 484h3v3h-3zM110 494h3v3h-3zM102 507h3v3h-3zM103 501h3v3h-3zM102 486h3v3h-3zM97 473h3v3h-3zM93 493h3v3h-3zM102 499h3v3h-3zM112 483h3v3h-3zM94 492h3v3h-3zM110 478h3v3h-3zM93 493h3v3h-3zM100 504h3v3h-3zM101 514h3v3h-3zM92 473h3v3h-3zM103 495h3v3h-3zM102 478h3v3h-3zM104 481h3v3h-3zM106 500h3v3h-3zM101 511h3v3h-3zM102 481h3v3h-3zM93 493h3v3h-3zM95 477h3v3h-3zM96 473h3v3h-3zM92 484h3v3h-3zM113 507h3v3h-3zM94 497h3v3h-3zM99 514h3v3h-3zM105 491h3v3h-3zM113 482h3v3h-3zM101 494h3v3h-3zM92 487h3v3h-3zM105 491h3v3h-3zM125 510h3v3h-3zM129 510h3v3h-3zM133 510h3v3h-3zM137 511h3v3h-3zM135 522h3v3h-3zM140 522h3v3h-3zM142 522h3v3h-3zM147 522h3v3h-3zM151 522h3v3h-3zM156 521h3v3h-3zM107 538h3v3h-3zM96 539h3v3h-3zM94 534h3v3h-3zM106 532h3v3h-3zM107 539h3v3h-3zM106 539h3v3h-3zM104 539h3v3h-3zM97 531h3v3h-3zM104 528h3v3h-3zM104 537h3v3h-3zM106 538h3v3h-3zM105 537h3v3h-3zM95 540h3v3h-3zM112 537h3v3h-3zM97 539h3v3h-3zM109 539h3v3h-3zM107 542h3v3h-3zM112 530h3v3h-3zM105 540h3v3h-3zM102 537h3v3h-3zM107 533h3v3h-3zM105 533h3v3h-3zM209 504h3v3h-3zM212 504h3v3h-3zM215 504h3v3h-3zM217 503h3v3h-3zM219 502h3v3h-3zM224 502h3v3h-3zM226 500h3v3h-3zM300 537h3v3h-3zM303 536h3v3h-3zM306 536h3v3h-3zM308 534h3v3h-3zM311 533h3v3h-3zM314 533h3v3h-3zM317 532h3v3h-3zM342 522h3v3h-3zM343 521h3v3h-3zM346 522h3v3h-3zM347 520h3v3h-3zM349 519h3v3h-3zM304 584h3v3h-3zM302 589h3v3h-3zM300 585h3v3h-3zM294 590h3v3h-3zM292 581h3v3h-3zM296 589h3v3h-3zM310 585h3v3h-3zM299 577h3v3h-3zM300 575h3v3h-3zM292 592h3v3h-3zM290 580h3v3h-3zM294 578h3v3h-3zM301 567h3v3h-3zM295 575h3v3h-3zM298 580h3v3h-3zM293 591h3v3h-3zM300 570h3v3h-3zM290 589h3v3h-3zM295 579h3v3h-3zM307 577h3v3h-3zM290 582h3v3h-3zM293 585h3v3h-3zM298 567h3v3h-3zM291 590h3v3h-3zM291 588h3v3h-3zM305 579h3v3h-3zM300 567h3v3h-3zM297 592h3v3h-3zM307 581h3v3h-3zM298 590h3v3h-3zM305 586h3v3h-3zM314 596h3v3h-3zM311 608h3v3h-3zM307 602h3v3h-3zM318 603h3v3h-3zM303 611h3v3h-3zM308 601h3v3h-3zM310 599h3v3h-3zM307 600h3v3h-3zM316 595h3v3h-3zM306 608h3v3h-3zM317 587h3v3h-3zM317 604h3v3h-3zM318 605h3v3h-3zM315 591h3v3h-3zM311 607h3v3h-3zM318 602h3v3h-3zM307 612h3v3h-3zM305 599h3v3h-3zM315 607h3v3h-3zM314 610h3v3h-3zM315 606h3v3h-3zM306 602h3v3h-3zM306 611h3v3h-3zM320 591h3v3h-3zM314 602h3v3h-3zM316 596h3v3h-3zM313 594h3v3h-3zM312 603h3v3h-3zM308 593h3v3h-3zM312 603h3v3h-3zM315 606h3v3h-3zM306 602h3v3h-3zM313 595h3v3h-3zM316 592h3v3h-3zM313 605h3v3h-3zM316 593h3v3h-3zM302 612h3v3h-3zM310 602h3v3h-3zM310 591h3v3h-3zM305 600h3v3h-3zM308 602h3v3h-3zM311 600h3v3h-3zM303 609h3v3h-3zM318 598h3v3h-3zM316 599h3v3h-3zM309 599h3v3h-3zM303 605h3v3h-3zM306 613h3v3h-3zM305 601h3v3h-3zM319 599h3v3h-3zM310 607h3v3h-3zM350 560h3v3h-3zM894 610h3v3h-3zM908 600h3v3h-3zM898 611h3v3h-3zM899 609h3v3h-3zM920 604h3v3h-3zM897 607h3v3h-3zM911 605h3v3h-3zM896 602h3v3h-3zM906 601h3v3h-3zM895 608h3v3h-3zM917 605h3v3h-3zM916 601h3v3h-3zM916 612h3v3h-3zM907 605h3v3h-3zM892 603h3v3h-3zM913 601h3v3h-3zM898 609h3v3h-3zM894 610h3v3h-3zM918 611h3v3h-3zM892 614h3v3h-3zM891 617h3v3h-3zM893 617h3v3h-3zM896 618h3v3h-3zM898 617h3v3h-3zM899 617h3v3h-3zM899 620h3v3h-3zM898 622h3v3h-3zM899 624h3v3h-3zM904 626h3v3h-3zM907 625h3v3h-3zM907 628h3v3h-3zM911 630h3v3h-3zM932 703h3v3h-3z"/>
<path fill="#70e000" d="M317 198h3v3h-3zM320 202h3v3h-3zM323 202h3v3h-3zM330 208h3v3h-3zM334 210h3v3h-3zM352 220h3v3h-3zM364 228h3v3h-3zM368 235h3v3h-3zM372 240h3v3h-3zM375 242h3v3h-3zM377 249h3v3h-3zM380 252h3v3h-3zM383 258h3v3h-3zM386 262h3v3h-3zM387 264h3v3h-3zM389 267h3v3h-3zM391 271h3v3h-3zM392 273h3v3h-3zM395 274h3v3h-3zM396 276h3v3h-3zM399 280h3v3h-3zM400 281h3v3h-3zM399 285h3v3h-3zM404 290h3v3h-3zM405 295h3v3h-3zM405 297h3v3h-3zM412 306h3v3h-3zM416 309h3v3h-3zM416 310h3v3h-3zM417 312h3v3h-3zM424 323h3v3h-3zM425 324h3v3h-3zM428 329h3v3h-3zM426 333h3v3h-3zM432 340h3v3h-3zM436 348h3v3h-3zM438 349h3v3h-3zM441 354h3v3h-3zM445 367h3v3h-3zM446 370h3v3h-3zM449 369h3v3h-3zM455 378h3v3h-3zM461 386h3v3h-3zM462 388h3v3h-3zM465 398h3v3h-3zM344 213h3v3h-3zM343 218h3v3h-3zM349 215h3v3h-3zM348 220h3v3h-3zM348 220h3v3h-3zM347 223h3v3h-3zM347 226h3v3h-3zM356 219h3v3h-3zM358 219h3v3h-3zM358 220h3v3h-3zM357 223h3v3h-3zM357 229h3v3h-3zM356 233h3v3h-3zM361 230h3v3h-3zM361 233h3v3h-3zM360 236h3v3h-3zM364 237h3v3h-3zM374 238h3v3h-3zM373 242h3v3h-3zM448 382h3v3h-3zM447 384h3v3h-3zM450 376h3v3h-3zM448 383h3v3h-3zM461 400h3v3h-3zM459 388h3v3h-3zM450 379h3v3h-3zM454 368h3v3h-3zM467 397h3v3h-3zM460 375h3v3h-3zM459 383h3v3h-3zM462 400h3v3h-3zM450 374h3v3h-3zM462 394h3v3h-3zM448 378h3v3h-3zM455 375h3v3h-3zM456 368h3v3h-3zM459 390h3v3h-3zM457 370h3v3h-3zM450 379h3v3h-3zM496 183h3v3h-3zM499 171h3v3h-3zM498 170h3v3h-3zM507 170h3v3h-3zM499 163h3v3h-3zM500 166h3v3h-3zM507 165h3v3h-3zM503 171h3v3h-3zM498 171h3v3h-3zM500 172h3v3h-3zM504 172h3v3h-3zM505 175h3v3h-3zM507 176h3v3h-3zM498 184h3v3h-3zM501 180h3v3h-3zM519 178h3v3h-3zM520 182h3v3h-3zM519 182h3v3h-3zM519 185h3v3h-3zM515 188h3v3h-3zM518 192h3v3h-3zM513 199h3v3h-3zM515 203h3v3h-3zM513 209h3v3h-3zM510 216h3v3h-3zM510 223h3v3h-3zM532 196h3v3h-3zM533 199h3v3h-3zM532 203h3v3h-3zM531 206h3v3h-3zM530 209h3v3h-3zM530 212h3v3h-3zM530 216h3v3h-3zM529 219h3v3h-3zM527 238h3v3h-3zM527 240h3v3h-3zM522 245h3v3h-3zM522 255h3v3h-3zM520 264h3v3h-3zM518 273h3v3h-3zM122 390h3v3h-3zM138 394h3v3h-3zM144 396h3v3h-3zM146 396h3v3h-3zM154 398h3v3h-3zM165 398h3v3h-3zM174 400h3v3h-3zM176 401h3v3h-3zM185 404h3v3h-3zM216 412h3v3h-3zM223 417h3v3h-3zM238 421h3v3h-3zM118 440h3v3h-3zM111 437h3v3h-3zM110 432h3v3h-3zM107 433h3v3h-3zM110 431h3v3h-3zM109 436h3v3h-3zM101 427h3v3h-3zM104 428h3v3h-3zM108 432h3v3h-3zM108 433h3v3h-3zM96 430h3v3h-3zM107 428h3v3h-3zM99 433h3v3h-3zM113 433h3v3h-3zM106 433h3v3h-3zM103 437h3v3h-3zM101 435h3v3h-3zM114 432h3v3h-3zM104 431h3v3h-3zM113 428h3v3h-3zM110 432h3v3h-3zM101 434h3v3h-3zM112 431h3v3h-3zM98 432h3v3h-3zM106 440h3v3h-3zM112 438h3v3h-3zM104 443h3v3h-3zM101 448h3v3h-3zM98 455h3v3h-3zM101 451h3v3h-3zM96 457h3v3h-3zM101 453h3v3h-3zM92 447h3v3h-3zM105 449h3v3h-3zM108 453h3v3h-3zM93 454h3v3h-3zM101 449h3v3h-3zM100 449h3v3h-3zM100 453h3v3h-3zM92 455h3v3h-3zM99 443h3v3h-3zM97 460h3v3h-3zM100 456h3v3h-3zM104 451h3v3h-3zM108 454h3v3h-3zM94 452h3v3h-3zM98 459h3v3h-3zM107 450h3v3h-3zM98 454h3v3h-3zM109 571h3v3h-3zM111 568h3v3h-3zM119 566h3v3h-3zM123 568h3v3h-3zM125 567h3v3h-3zM129 568h3v3h-3zM145 568h3v3h-3zM149 569h3v3h-3zM171 568h3v3h-3zM172 564h3v3h-3zM176 563h3v3h-3zM181 566h3v3h-3zM182 563h3v3h-3zM184 563h3v3h-3zM189 565h3v3h-3zM190 561h3v3h-3zM194 559h3v3h-3zM202 563h3v3h-3zM209 561h3v3h-3zM214 560h3v3h-3zM215 558h3v3h-3zM226 558h3v3h-3zM233 557h3v3h-3zM247 556h3v3h-3zM263 559h3v3h-3zM265 554h3v3h-3zM276 555h3v3h-3zM281 555h3v3h-3zM285 560h3v3h-3zM287 560h3v3h-3zM300 556h3v3h-3zM306 554h3v3h-3zM312 547h3v3h-3zM275 565h3v3h-3zM293 559h3v3h-3zM298 556h3v3h-3zM297 553h3v3h-3zM302 552h3v3h-3zM305 547h3v3h-3zM318 544h3v3h-3zM321 543h3v3h-3zM324 548h3v3h-3zM326 543h3v3h-3zM328 547h3v3h-3zM333 548h3v3h-3zM327 574h3v3h-3zM328 572h3v3h-3zM332 570h3v3h-3zM337 568h3v3h-3zM340 565h3v3h-3zM343 567h3v3h-3zM317 605h3v3h-3zM324 600h3v3h-3zM327 599h3v3h-3zM328 597h3v3h-3zM330 596h3v3h-3zM333 594h3v3h-3zM336 593h3v3h-3zM337 592h3v3h-3zM326 615h3v3h-3zM328 613h3v3h-3zM331 612h3v3h-3zM335 608h3v3h-3zM339 605h3v3h-3zM341 602h3v3h-3zM344 600h3v3h-3zM347 600h3v3h-3zM349 596h3v3h-3zM363 584h3v3h-3z"/>
<path fill="#a8e400" d="M318 201h3v3h-3zM324 204h3v3h-3zM339 212h3v3h-3zM343 215h3v3h-3zM348 216h3v3h-3zM348 218h3v3h-3zM350 219h3v3h-3zM365 231h3v3h-3zM368 238h3v3h-3zM371 239h3v3h-3zM376 243h3v3h-3zM375 246h3v3h-3zM383 260h3v3h-3zM390 269h3v3h-3zM397 278h3v3h-3zM402 286h3v3h-3zM406 292h3v3h-3zM409 298h3v3h-3zM413 302h3v3h-3zM411 304h3v3h-3zM421 317h3v3h-3zM421 322h3v3h-3zM428 336h3v3h-3zM431 336h3v3h-3zM442 356h3v3h-3zM441 358h3v3h-3zM445 362h3v3h-3zM449 374h3v3h-3zM451 375h3v3h-3zM458 384h3v3h-3zM461 400h3v3h-3zM464 401h3v3h-3zM341 219h3v3h-3zM343 219h3v3h-3zM346 215h3v3h-3zM344 220h3v3h-3zM348 216h3v3h-3zM348 219h3v3h-3zM350 220h3v3h-3zM351 219h3v3h-3zM348 225h3v3h-3zM352 221h3v3h-3zM353 221h3v3h-3zM353 221h3v3h-3zM353 225h3v3h-3zM355 225h3v3h-3zM354 228h3v3h-3zM354 230h3v3h-3zM362 223h3v3h-3zM361 224h3v3h-3zM357 230h3v3h-3zM362 226h3v3h-3zM363 227h3v3h-3zM358 234h3v3h-3zM366 227h3v3h-3zM361 234h3v3h-3zM360 236h3v3h-3zM368 230h3v3h-3zM366 233h3v3h-3zM363 237h3v3h-3zM367 236h3v3h-3zM365 239h3v3h-3zM372 233h3v3h-3zM364 241h3v3h-3zM367 241h3v3h-3zM373 236h3v3h-3zM367 243h3v3h-3zM373 239h3v3h-3zM369 243h3v3h-3zM375 239h3v3h-3zM370 246h3v3h-3zM376 241h3v3h-3zM451 385h3v3h-3zM463 375h3v3h-3zM458 378h3v3h-3zM465 387h3v3h-3zM451 385h3v3h-3zM464 401h3v3h-3zM455 373h3v3h-3zM459 372h3v3h-3zM462 401h3v3h-3zM464 380h3v3h-3zM460 369h3v3h-3zM460 379h3v3h-3zM455 374h3v3h-3zM464 380h3v3h-3zM456 369h3v3h-3zM463 379h3v3h-3zM462 370h3v3h-3zM452 384h3v3h-3zM459 386h3v3h-3zM457 370h3v3h-3zM457 390h3v3h-3zM460 366h3v3h-3zM463 384h3v3h-3zM459 392h3v3h-3zM463 402h3v3h-3zM464 388h3v3h-3zM448 385h3v3h-3zM457 391h3v3h-3zM455 370h3v3h-3zM452 384h3v3h-3zM458 390h3v3h-3zM455 384h3v3h-3zM461 381h3v3h-3zM460 399h3v3h-3zM454 374h3v3h-3zM454 372h3v3h-3zM452 375h3v3h-3zM451 390h3v3h-3zM461 398h3v3h-3zM461 401h3v3h-3zM464 392h3v3h-3zM455 393h3v3h-3zM463 379h3v3h-3zM458 370h3v3h-3zM459 392h3v3h-3zM464 400h3v3h-3zM455 355h3v3h-3zM459 359h3v3h-3zM522 178h3v3h-3zM522 180h3v3h-3zM518 180h3v3h-3zM520 184h3v3h-3zM517 186h3v3h-3zM519 187h3v3h-3zM518 188h3v3h-3zM516 195h3v3h-3zM515 198h3v3h-3zM512 200h3v3h-3zM511 204h3v3h-3zM513 207h3v3h-3zM512 208h3v3h-3zM509 209h3v3h-3zM513 214h3v3h-3zM508 218h3v3h-3zM506 220h3v3h-3zM511 222h3v3h-3zM508 223h3v3h-3zM122 343h3v3h-3zM115 332h3v3h-3zM116 346h3v3h-3zM111 376h3v3h-3zM120 353h3v3h-3zM115 379h3v3h-3zM110 342h3v3h-3zM111 341h3v3h-3zM112 379h3v3h-3zM116 345h3v3h-3zM111 351h3v3h-3zM115 376h3v3h-3zM115 382h3v3h-3zM115 338h3v3h-3zM115 338h3v3h-3zM120 339h3v3h-3zM121 349h3v3h-3zM110 380h3v3h-3zM117 347h3v3h-3zM118 379h3v3h-3zM112 337h3v3h-3zM119 343h3v3h-3zM114 338h3v3h-3zM120 341h3v3h-3zM106 376h3v3h-3zM117 379h3v3h-3zM115 341h3v3h-3zM117 378h3v3h-3zM118 351h3v3h-3zM114 343h3v3h-3zM116 335h3v3h-3zM115 342h3v3h-3zM113 339h3v3h-3zM109 383h3v3h-3zM116 334h3v3h-3zM118 342h3v3h-3zM106 348h3v3h-3zM116 378h3v3h-3zM119 337h3v3h-3zM117 376h3v3h-3zM114 347h3v3h-3zM115 350h3v3h-3zM116 339h3v3h-3zM114 338h3v3h-3zM108 381h3v3h-3zM108 348h3v3h-3zM121 350h3v3h-3zM117 340h3v3h-3zM118 346h3v3h-3zM113 348h3v3h-3zM116 352h3v3h-3zM121 387h3v3h-3zM125 389h3v3h-3zM129 391h3v3h-3zM135 390h3v3h-3zM150 396h3v3h-3zM162 396h3v3h-3zM168 402h3v3h-3zM180 405h3v3h-3zM189 406h3v3h-3zM207 411h3v3h-3zM221 416h3v3h-3zM227 415h3v3h-3zM233 416h3v3h-3zM244 423h3v3h-3zM98 424h3v3h-3zM110 438h3v3h-3zM109 426h3v3h-3zM106 437h3v3h-3zM102 436h3v3h-3zM111 425h3v3h-3zM110 432h3v3h-3zM99 424h3v3h-3zM109 439h3v3h-3zM115 437h3v3h-3zM103 435h3v3h-3zM104 429h3v3h-3zM115 438h3v3h-3zM93 433h3v3h-3zM108 437h3v3h-3zM106 430h3v3h-3zM112 430h3v3h-3zM112 430h3v3h-3zM94 430h3v3h-3zM116 430h3v3h-3zM99 430h3v3h-3zM103 421h3v3h-3zM105 440h3v3h-3zM112 430h3v3h-3zM103 438h3v3h-3zM111 428h3v3h-3zM98 432h3v3h-3zM111 431h3v3h-3zM115 443h3v3h-3zM99 429h3v3h-3zM96 426h3v3h-3zM102 424h3v3h-3zM99 438h3v3h-3zM111 430h3v3h-3zM109 430h3v3h-3zM93 433h3v3h-3zM93 434h3v3h-3zM108 424h3v3h-3zM106 430h3v3h-3zM93 434h3v3h-3zM105 435h3v3h-3zM109 433h3v3h-3zM97 432h3v3h-3zM106 433h3v3h-3zM104 423h3v3h-3zM109 429h3v3h-3zM118 425h3v3h-3zM101 442h3v3h-3zM108 432h3v3h-3zM110 437h3v3h-3zM108 436h3v3h-3zM103 435h3v3h-3zM114 437h3v3h-3zM108 443h3v3h-3zM108 433h3v3h-3zM113 431h3v3h-3zM102 423h3v3h-3zM107 430h3v3h-3zM111 435h3v3h-3zM118 430h3v3h-3zM108 423h3v3h-3zM103 431h3v3h-3zM107 432h3v3h-3zM102 431h3v3h-3zM86 552h3v3h-3zM84 553h3v3h-3zM86 553h3v3h-3zM102 554h3v3h-3zM105 553h3v3h-3zM113 573h3v3h-3zM116 572h3v3h-3zM118 570h3v3h-3zM121 566h3v3h-3zM131 569h3v3h-3zM134 568h3v3h-3zM137 564h3v3h-3zM138 567h3v3h-3zM141 570h3v3h-3zM143 569h3v3h-3zM147 568h3v3h-3zM150 569h3v3h-3zM153 565h3v3h-3zM155 569h3v3h-3zM157 566h3v3h-3zM158 566h3v3h-3zM161 568h3v3h-3zM162 569h3v3h-3zM163 564h3v3h-3zM168 567h3v3h-3zM175 566h3v3h-3zM178 566h3v3h-3zM185 560h3v3h-3zM192 561h3v3h-3zM195 559h3v3h-3zM198 562h3v3h-3zM199 563h3v3h-3zM203 559h3v3h-3zM205 558h3v3h-3zM207 559h3v3h-3zM211 557h3v3h-3zM217 556h3v3h-3zM219 556h3v3h-3zM221 556h3v3h-3zM223 559h3v3h-3zM228 556h3v3h-3zM229 558h3v3h-3zM231 560h3v3h-3zM236 559h3v3h-3zM238 555h3v3h-3zM241 557h3v3h-3zM243 558h3v3h-3zM244 557h3v3h-3zM249 555h3v3h-3zM251 554h3v3h-3zM253 555h3v3h-3zM254 555h3v3h-3zM256 557h3v3h-3zM259 557h3v3h-3zM261 558h3v3h-3zM267 558h3v3h-3zM268 558h3v3h-3zM270 556h3v3h-3zM272 558h3v3h-3zM276 557h3v3h-3zM279 554h3v3h-3zM283 559h3v3h-3zM288 560h3v3h-3zM291 556h3v3h-3zM293 555h3v3h-3zM296 559h3v3h-3zM296 554h3v3h-3zM301 551h3v3h-3zM305 554h3v3h-3zM307 552h3v3h-3zM308 548h3v3h-3zM310 549h3v3h-3zM318 550h3v3h-3zM318 546h3v3h-3zM322 549h3v3h-3zM324 548h3v3h-3zM370 517h3v3h-3zM375 515h3v3h-3zM380 511h3v3h-3zM382 510h3v3h-3zM384 509h3v3h-3zM387 510h3v3h-3zM392 506h3v3h-3zM394 505h3v3h-3zM398 505h3v3h-3zM399 503h3v3h-3zM406 502h3v3h-3zM408 501h3v3h-3zM409 498h3v3h-3zM414 498h3v3h-3zM418 496h3v3h-3zM346 541h3v3h-3zM346 540h3v3h-3zM347 539h3v3h-3zM349 537h3v3h-3zM351 538h3v3h-3zM276 561h3v3h-3zM278 564h3v3h-3zM279 559h3v3h-3zM281 560h3v3h-3zM283 559h3v3h-3zM285 559h3v3h-3zM287 558h3v3h-3zM288 560h3v3h-3zM290 558h3v3h-3zM292 555h3v3h-3zM295 556h3v3h-3zM300 555h3v3h-3zM302 550h3v3h-3zM304 548h3v3h-3zM305 546h3v3h-3zM308 545h3v3h-3zM310 547h3v3h-3zM312 548h3v3h-3zM315 546h3v3h-3zM316 545h3v3h-3zM320 546h3v3h-3zM324 543h3v3h-3zM330 545h3v3h-3zM321 575h3v3h-3zM324 576h3v3h-3zM325 575h3v3h-3zM329 572h3v3h-3zM333 570h3v3h-3zM335 569h3v3h-3zM337 569h3v3h-3zM339 566h3v3h-3zM723 669h3v3h-3zM720 670h3v3h-3zM715 673h3v3h-3zM723 673h3v3h-3zM705 663h3v3h-3zM732 674h3v3h-3zM702 679h3v3h-3zM720 675h3v3h-3zM716 678h3v3h-3zM704 672h3v3h-3zM725 669h3v3h-3zM713 679h3v3h-3zM703 666h3v3h-3zM715 663h3v3h-3zM710 669h3v3h-3zM726 662h3v3h-3zM715 689h3v3h-3zM717 692h3v3h-3zM718 693h3v3h-3zM721 696h3v3h-3zM722 698h3v3h-3zM725 700h3v3h-3zM727 701h3v3h-3zM728 703h3v3h-3zM905 690h3v3h-3zM908 693h3v3h-3zM910 694h3v3h-3zM915 697h3v3h-3zM917 698h3v3h-3z"/>
<path fill="#40ee00" d="M314 199h3v3h-3zM315 201h3v3h-3zM318 197h3v3h-3zM319 199h3v3h-3zM320 197h3v3h-3zM321 197h3v3h-3zM322 198h3v3h-3zM320 203h3v3h-3zM321 205h3v3h-3zM322 205h3v3h-3zM327 207h3v3h-3zM330 207h3v3h-3zM331 209h3v3h-3zM334 205h3v3h-3zM332 213h3v3h-3zM336 206h3v3h-3zM337 207h3v3h-3zM338 208h3v3h-3zM336 214h3v3h-3zM336 215h3v3h-3zM338 213h3v3h-3zM340 209h3v3h-3zM340 211h3v3h-3zM341 211h3v3h-3zM341 214h3v3h-3zM340 216h3v3h-3zM457 174h3v3h-3zM459 176h3v3h-3zM474 168h3v3h-3zM455 171h3v3h-3zM456 165h3v3h-3zM473 172h3v3h-3zM473 176h3v3h-3zM453 167h3v3h-3zM457 172h3v3h-3zM464 163h3v3h-3zM479 167h3v3h-3zM453 166h3v3h-3zM463 179h3v3h-3zM468 180h3v3h-3zM455 173h3v3h-3zM461 166h3v3h-3zM448 173h3v3h-3zM472 172h3v3h-3zM457 163h3v3h-3zM450 172h3v3h-3zM454 165h3v3h-3zM462 180h3v3h-3zM478 170h3v3h-3zM462 174h3v3h-3zM465 165h3v3h-3zM460 167h3v3h-3zM465 168h3v3h-3zM480 181h3v3h-3zM459 170h3v3h-3zM475 181h3v3h-3zM455 166h3v3h-3zM472 176h3v3h-3zM463 168h3v3h-3zM467 176h3v3h-3zM464 178h3v3h-3zM476 168h3v3h-3zM475 169h3v3h-3zM458 174h3v3h-3zM464 171h3v3h-3zM476 173h3v3h-3zM463 173h3v3h-3zM446 181h3v3h-3zM474 163h3v3h-3zM449 179h3v3h-3zM463 168h3v3h-3zM460 165h3v3h-3zM472 166h3v3h-3zM447 181h3v3h-3zM475 164h3v3h-3zM479 180h3v3h-3zM469 163h3v3h-3zM452 169h3v3h-3zM473 180h3v3h-3zM474 179h3v3h-3zM455 173h3v3h-3zM449 165h3v3h-3zM454 163h3v3h-3zM458 166h3v3h-3zM462 173h3v3h-3zM466 168h3v3h-3zM459 174h3v3h-3zM457 168h3v3h-3zM447 163h3v3h-3zM467 169h3v3h-3zM470 180h3v3h-3zM450 170h3v3h-3zM461 170h3v3h-3zM474 169h3v3h-3zM466 169h3v3h-3zM463 175h3v3h-3zM470 177h3v3h-3zM458 169h3v3h-3zM468 172h3v3h-3zM463 166h3v3h-3zM480 175h3v3h-3zM475 174h3v3h-3zM450 165h3v3h-3zM474 174h3v3h-3zM471 169h3v3h-3zM455 164h3v3h-3zM501 177h3v3h-3zM496 184h3v3h-3zM496 182h3v3h-3zM498 171h3v3h-3zM497 169h3v3h-3zM501 182h3v3h-3zM499 176h3v3h-3zM501 164h3v3h-3zM500 178h3v3h-3zM498 179h3v3h-3zM507 182h3v3h-3zM499 177h3v3h-3zM501 180h3v3h-3zM508 175h3v3h-3zM504 171h3v3h-3zM508 178h3v3h-3zM515 190h3v3h-3zM518 192h3v3h-3zM518 193h3v3h-3zM517 195h3v3h-3zM515 196h3v3h-3zM513 198h3v3h-3zM512 201h3v3h-3zM510 203h3v3h-3zM511 205h3v3h-3zM508 210h3v3h-3zM513 212h3v3h-3zM510 214h3v3h-3zM507 215h3v3h-3zM507 217h3v3h-3zM510 220h3v3h-3zM543 162h3v3h-3zM544 164h3v3h-3zM546 167h3v3h-3zM543 167h3v3h-3zM543 168h3v3h-3zM542 171h3v3h-3zM543 172h3v3h-3zM540 172h3v3h-3zM542 175h3v3h-3zM540 177h3v3h-3zM539 177h3v3h-3zM538 179h3v3h-3zM538 181h3v3h-3zM538 183h3v3h-3zM538 184h3v3h-3zM535 186h3v3h-3zM539 210h3v3h-3zM539 213h3v3h-3zM539 217h3v3h-3zM537 220h3v3h-3zM536 221h3v3h-3zM537 225h3v3h-3zM535 229h3v3h-3zM535 232h3v3h-3zM523 242h3v3h-3zM522 247h3v3h-3zM524 251h3v3h-3zM524 253h3v3h-3zM520 259h3v3h-3zM521 260h3v3h-3zM520 265h3v3h-3zM519 269h3v3h-3zM520 272h3v3h-3zM751 303h3v3h-3zM754 304h3v3h-3zM754 304h3v3h-3zM752 300h3v3h-3zM755 302h3v3h-3zM753 299h3v3h-3zM756 300h3v3h-3zM755 298h3v3h-3zM755 296h3v3h-3zM762 298h3v3h-3zM759 293h3v3h-3zM760 293h3v3h-3zM761 292h3v3h-3zM763 292h3v3h-3zM765 292h3v3h-3zM763 289h3v3h-3zM765 290h3v3h-3zM763 288h3v3h-3zM764 287h3v3h-3zM766 288h3v3h-3zM767 288h3v3h-3zM770 285h3v3h-3zM772 286h3v3h-3zM767 280h3v3h-3zM771 282h3v3h-3zM769 280h3v3h-3zM737 320h3v3h-3zM735 318h3v3h-3zM733 319h3v3h-3zM734 322h3v3h-3zM731 321h3v3h-3zM729 322h3v3h-3zM730 325h3v3h-3zM712 331h3v3h-3zM713 335h3v3h-3zM713 336h3v3h-3zM711 336h3v3h-3zM706 339h3v3h-3zM705 338h3v3h-3zM705 342h3v3h-3zM708 345h3v3h-3zM705 346h3v3h-3zM703 345h3v3h-3zM702 346h3v3h-3zM701 348h3v3h-3zM703 350h3v3h-3zM699 350h3v3h-3zM704 351h3v3h-3zM696 351h3v3h-3zM706 353h3v3h-3zM700 353h3v3h-3zM699 354h3v3h-3zM701 354h3v3h-3zM700 355h3v3h-3zM702 356h3v3h-3zM701 356h3v3h-3zM702 357h3v3h-3zM702 361h3v3h-3zM703 361h3v3h-3zM703 362h3v3h-3zM699 362h3v3h-3zM701 364h3v3h-3zM704 364h3v3h-3zM702 365h3v3h-3zM694 365h3v3h-3zM704 367h3v3h-3zM699 369h3v3h-3zM702 373h3v3h-3zM704 375h3v3h-3zM701 375h3v3h-3zM697 376h3v3h-3zM696 377h3v3h-3zM691 380h3v3h-3zM704 380h3v3h-3zM703 382h3v3h-3zM691 383h3v3h-3zM704 383h3v3h-3zM698 384h3v3h-3zM700 385h3v3h-3zM693 386h3v3h-3zM704 387h3v3h-3zM696 388h3v3h-3zM691 388h3v3h-3zM692 389h3v3h-3zM699 389h3v3h-3zM700 390h3v3h-3zM701 390h3v3h-3zM691 391h3v3h-3zM698 394h3v3h-3zM696 394h3v3h-3zM696 395h3v3h-3zM706 396h3v3h-3zM697 400h3v3h-3zM704 398h3v3h-3zM702 399h3v3h-3zM703 399h3v3h-3zM690 403h3v3h-3zM691 403h3v3h-3zM696 402h3v3h-3zM694 403h3v3h-3zM695 403h3v3h-3zM702 402h3v3h-3zM696 404h3v3h-3zM700 404h3v3h-3zM701 404h3v3h-3zM697 406h3v3h-3zM693 409h3v3h-3zM704 406h3v3h-3zM709 405h3v3h-3zM704 408h3v3h-3zM700 411h3v3h-3zM693 414h3v3h-3zM709 409h3v3h-3zM702 414h3v3h-3zM708 413h3v3h-3zM698 419h3v3h-3zM709 415h3v3h-3zM713 415h3v3h-3zM705 418h3v3h-3zM713 419h3v3h-3zM710 422h3v3h-3zM705 424h3v3h-3zM704 426h3v3h-3zM699 428h3v3h-3zM712 424h3v3h-3zM701 429h3v3h-3zM707 427h3v3h-3zM707 428h3v3h-3zM711 428h3v3h-3zM717 425h3v3h-3zM716 426h3v3h-3zM707 433h3v3h-3zM716 427h3v3h-3zM707 433h3v3h-3zM705 435h3v3h-3zM715 429h3v3h-3zM715 429h3v3h-3zM715 431h3v3h-3zM706 439h3v3h-3zM706 439h3v3h-3zM710 436h3v3h-3zM713 435h3v3h-3zM712 436h3v3h-3zM713 437h3v3h-3zM714 437h3v3h-3zM714 437h3v3h-3zM720 433h3v3h-3zM711 440h3v3h-3zM717 437h3v3h-3zM721 436h3v3h-3zM717 440h3v3h-3zM709 446h3v3h-3zM718 444h3v3h-3zM718 445h3v3h-3zM714 449h3v3h-3zM728 440h3v3h-3zM717 449h3v3h-3zM722 446h3v3h-3zM720 448h3v3h-3zM724 446h3v3h-3zM727 445h3v3h-3zM729 444h3v3h-3zM725 450h3v3h-3zM720 456h3v3h-3zM726 451h3v3h-3zM727 453h3v3h-3zM724 460h3v3h-3zM731 451h3v3h-3zM725 460h3v3h-3zM731 452h3v3h-3zM729 457h3v3h-3zM732 455h3v3h-3zM737 452h3v3h-3zM731 463h3v3h-3zM733 462h3v3h-3zM734 463h3v3h-3zM741 455h3v3h-3zM741 455h3v3h-3zM734 465h3v3h-3zM736 462h3v3h-3zM742 458h3v3h-3zM740 460h3v3h-3zM739 463h3v3h-3zM740 463h3v3h-3zM743 460h3v3h-3zM744 459h3v3h-3zM745 458h3v3h-3zM740 466h3v3h-3zM744 464h3v3h-3zM746 465h3v3h-3zM750 466h3v3h-3zM749 470h3v3h-3zM754 467h3v3h-3zM754 468h3v3h-3zM751 474h3v3h-3zM754 472h3v3h-3zM755 472h3v3h-3zM758 470h3v3h-3zM759 472h3v3h-3zM759 473h3v3h-3zM758 476h3v3h-3zM762 474h3v3h-3zM761 477h3v3h-3zM764 476h3v3h-3zM762 480h3v3h-3zM764 481h3v3h-3zM768 477h3v3h-3zM776 482h3v3h-3zM779 482h3v3h-3zM782 479h3v3h-3zM782 481h3v3h-3zM783 482h3v3h-3zM852 498h3v3h-3zM853 509h3v3h-3zM863 497h3v3h-3zM858 513h3v3h-3zM858 491h3v3h-3zM852 491h3v3h-3zM855 508h3v3h-3zM847 500h3v3h-3zM848 501h3v3h-3zM850 506h3v3h-3zM857 502h3v3h-3zM862 507h3v3h-3zM856 512h3v3h-3zM851 502h3v3h-3zM862 506h3v3h-3zM856 510h3v3h-3zM859 502h3v3h-3zM850 499h3v3h-3zM863 507h3v3h-3zM861 503h3v3h-3zM865 513h3v3h-3zM856 514h3v3h-3zM848 501h3v3h-3zM858 515h3v3h-3zM852 500h3v3h-3zM856 498h3v3h-3zM853 504h3v3h-3zM850 491h3v3h-3zM860 492h3v3h-3zM858 498h3v3h-3zM863 511h3v3h-3zM116 283h3v3h-3zM117 282h3v3h-3zM119 281h3v3h-3zM120 296h3v3h-3zM113 327h3v3h-3zM105 310h3v3h-3zM110 374h3v3h-3zM114 296h3v3h-3zM115 363h3v3h-3zM111 342h3v3h-3zM116 311h3v3h-3zM121 327h3v3h-3zM113 304h3v3h-3zM115 312h3v3h-3zM113 284h3v3h-3zM113 367h3v3h-3zM112 290h3v3h-3zM110 312h3v3h-3zM117 298h3v3h-3zM105 321h3v3h-3zM110 314h3v3h-3zM119 365h3v3h-3zM111 282h3v3h-3zM115 301h3v3h-3zM112 367h3v3h-3zM120 324h3v3h-3zM121 289h3v3h-3zM109 313h3v3h-3zM119 363h3v3h-3zM114 300h3v3h-3zM121 316h3v3h-3zM110 321h3v3h-3zM114 374h3v3h-3zM122 329h3v3h-3zM119 288h3v3h-3zM121 310h3v3h-3zM111 285h3v3h-3zM121 305h3v3h-3zM108 294h3v3h-3zM117 303h3v3h-3zM111 289h3v3h-3zM121 319h3v3h-3zM117 374h3v3h-3zM120 284h3v3h-3zM120 329h3v3h-3zM108 286h3v3h-3zM118 366h3v3h-3zM112 353h3v3h-3zM121 291h3v3h-3zM112 292h3v3h-3zM110 291h3v3h-3zM120 331h3v3h-3zM116 317h3v3h-3zM110 302h3v3h-3zM113 293h3v3h-3zM112 318h3v3h-3zM116 294h3v3h-3zM118 368h3v3h-3zM112 380h3v3h-3zM113 283h3v3h-3zM115 274h3v3h-3zM110 277h3v3h-3zM111 299h3v3h-3zM116 289h3v3h-3zM108 291h3v3h-3zM113 274h3v3h-3zM112 287h3v3h-3zM119 368h3v3h-3zM113 370h3v3h-3zM107 330h3v3h-3zM112 367h3v3h-3zM116 294h3v3h-3zM117 283h3v3h-3zM114 374h3v3h-3zM118 346h3v3h-3zM115 319h3v3h-3zM118 308h3v3h-3zM122 293h3v3h-3zM110 378h3v3h-3zM118 327h3v3h-3zM116 289h3v3h-3zM116 366h3v3h-3zM121 281h3v3h-3zM116 337h3v3h-3zM113 309h3v3h-3zM111 307h3v3h-3zM113 328h3v3h-3zM118 308h3v3h-3zM118 369h3v3h-3zM108 364h3v3h-3zM112 306h3v3h-3zM119 293h3v3h-3zM114 348h3v3h-3zM112 273h3v3h-3zM118 297h3v3h-3zM113 373h3v3h-3zM111 287h3v3h-3zM122 328h3v3h-3zM114 325h3v3h-3zM106 310h3v3h-3zM108 358h3v3h-3zM118 315h3v3h-3zM116 370h3v3h-3zM114 299h3v3h-3zM120 296h3v3h-3zM111 286h3v3h-3zM112 312h3v3h-3zM124 282h3v3h-3zM120 370h3v3h-3zM118 322h3v3h-3zM116 286h3v3h-3zM119 354h3v3h-3zM118 296h3v3h-3zM117 295h3v3h-3zM111 289h3v3h-3zM120 358h3v3h-3zM111 279h3v3h-3zM119 282h3v3h-3zM118 311h3v3h-3zM113 370h3v3h-3zM116 351h3v3h-3zM123 286h3v3h-3zM121 310h3v3h-3zM111 371h3v3h-3zM110 312h3v3h-3zM102 449h3v3h-3zM96 454h3v3h-3zM103 453h3v3h-3zM97 451h3v3h-3zM107 451h3v3h-3zM103 453h3v3h-3zM101 455h3v3h-3zM110 446h3v3h-3zM107 454h3v3h-3zM95 454h3v3h-3zM99 451h3v3h-3zM105 452h3v3h-3zM108 448h3v3h-3zM98 448h3v3h-3zM103 452h3v3h-3zM98 458h3v3h-3zM107 448h3v3h-3zM103 453h3v3h-3zM104 458h3v3h-3zM104 448h3v3h-3zM100 450h3v3h-3zM99 452h3v3h-3zM105 445h3v3h-3zM105 495h3v3h-3zM97 494h3v3h-3zM100 480h3v3h-3zM98 480h3v3h-3zM103 494h3v3h-3zM99 505h3v3h-3zM103 473h3v3h-3zM100 481h3v3h-3zM109 499h3v3h-3zM91 498h3v3h-3zM96 481h3v3h-3zM109 497h3v3h-3zM106 492h3v3h-3zM109 514h3v3h-3zM105 496h3v3h-3zM106 490h3v3h-3zM116 487h3v3h-3zM103 492h3v3h-3zM96 498h3v3h-3zM109 500h3v3h-3zM111 506h3v3h-3zM99 485h3v3h-3zM107 490h3v3h-3zM96 504h3v3h-3zM102 475h3v3h-3zM103 497h3v3h-3zM110 510h3v3h-3zM100 488h3v3h-3zM105 483h3v3h-3zM100 496h3v3h-3zM94 496h3v3h-3zM101 491h3v3h-3zM100 494h3v3h-3zM105 502h3v3h-3zM107 484h3v3h-3zM106 504h3v3h-3zM114 502h3v3h-3zM107 497h3v3h-3zM114 498h3v3h-3zM112 506h3v3h-3zM106 500h3v3h-3zM104 494h3v3h-3zM101 497h3v3h-3zM96 487h3v3h-3zM104 531h3v3h-3zM107 542h3v3h-3zM117 530h3v3h-3zM92 535h3v3h-3zM104 531h3v3h-3zM108 543h3v3h-3zM103 532h3v3h-3zM105 532h3v3h-3zM106 532h3v3h-3zM93 537h3v3h-3zM93 536h3v3h-3zM104 541h3v3h-3zM117 536h3v3h-3zM102 535h3v3h-3zM92 534h3v3h-3zM112 540h3v3h-3zM104 540h3v3h-3zM117 536h3v3h-3zM95 528h3v3h-3zM108 535h3v3h-3zM104 529h3v3h-3zM112 543h3v3h-3zM109 534h3v3h-3zM294 592h3v3h-3zM297 582h3v3h-3zM297 570h3v3h-3zM303 571h3v3h-3zM298 569h3v3h-3zM303 588h3v3h-3zM298 580h3v3h-3zM297 590h3v3h-3zM304 579h3v3h-3zM297 582h3v3h-3zM304 588h3v3h-3zM307 589h3v3h-3zM304 590h3v3h-3zM296 593h3v3h-3zM300 574h3v3h-3zM302 592h3v3h-3zM309 587h3v3h-3zM304 573h3v3h-3zM297 585h3v3h-3zM301 572h3v3h-3zM308 582h3v3h-3zM305 572h3v3h-3zM304 591h3v3h-3zM288 588h3v3h-3zM303 578h3v3h-3zM292 586h3v3h-3zM290 582h3v3h-3zM299 586h3v3h-3zM294 576h3v3h-3zM298 567h3v3h-3zM304 569h3v3h-3zM302 564h3v3h-3zM306 563h3v3h-3zM307 561h3v3h-3zM309 560h3v3h-3zM312 558h3v3h-3zM314 557h3v3h-3zM315 555h3v3h-3zM318 554h3v3h-3zM321 553h3v3h-3zM323 552h3v3h-3zM326 550h3v3h-3zM327 550h3v3h-3zM330 547h3v3h-3zM332 546h3v3h-3zM362 573h3v3h-3zM364 573h3v3h-3zM367 571h3v3h-3zM368 570h3v3h-3zM371 566h3v3h-3zM372 565h3v3h-3zM374 564h3v3h-3zM375 561h3v3h-3zM380 561h3v3h-3zM382 558h3v3h-3zM383 556h3v3h-3zM385 554h3v3h-3zM386 554h3v3h-3zM389 552h3v3h-3zM391 552h3v3h-3zM392 549h3v3h-3zM371 578h3v3h-3zM373 576h3v3h-3zM374 574h3v3h-3zM378 573h3v3h-3zM379 571h3v3h-3zM381 570h3v3h-3zM383 568h3v3h-3zM384 565h3v3h-3zM388 565h3v3h-3zM389 563h3v3h-3zM392 561h3v3h-3zM393 559h3v3h-3zM395 558h3v3h-3zM396 555h3v3h-3zM311 606h3v3h-3zM314 606h3v3h-3zM318 602h3v3h-3zM320 601h3v3h-3zM322 602h3v3h-3zM332 595h3v3h-3zM324 617h3v3h-3zM334 611h3v3h-3zM334 609h3v3h-3zM341 604h3v3h-3zM348 599h3v3h-3zM343 587h3v3h-3zM354 586h3v3h-3zM354 589h3v3h-3zM355 592h3v3h-3zM911 605h3v3h-3zM912 605h3v3h-3zM918 604h3v3h-3zM889 606h3v3h-3zM920 605h3v3h-3zM888 607h3v3h-3zM911 603h3v3h-3zM896 606h3v3h-3zM916 607h3v3h-3zM896 607h3v3h-3zM900 603h3v3h-3zM902 607h3v3h-3zM897 608h3v3h-3zM903 604h3v3h-3zM907 609h3v3h-3zM917 613h3v3h-3zM916 600h3v3h-3zM894 608h3v3h-3zM909 602h3v3h-3zM888 609h3v3h-3zM892 612h3v3h-3zM894 618h3v3h-3zM902 622h3v3h-3zM905 621h3v3h-3zM904 623h3v3h-3zM908 623h3v3h-3zM908 628h3v3h-3zM910 628h3v3h-3zM912 627h3v3h-3zM914 629h3v3h-3z"/>
<path fill="#30f000" d="M313 202h3v3h-3zM323 206h3v3h-3zM325 205h3v3h-3zM326 208h3v3h-3zM333 209h3v3h-3zM338 208h3v3h-3zM448 181h3v3h-3zM455 179h3v3h-3zM449 171h3v3h-3zM455 172h3v3h-3zM451 172h3v3h-3zM448 164h3v3h-3zM456 163h3v3h-3zM471 167h3v3h-3zM459 170h3v3h-3zM476 174h3v3h-3zM454 167h3v3h-3zM472 172h3v3h-3zM474 172h3v3h-3zM476 163h3v3h-3zM460 177h3v3h-3zM478 177h3v3h-3zM480 172h3v3h-3zM452 172h3v3h-3zM455 175h3v3h-3z"/>
<path fill="#b8f000" d="M346 217h3v3h-3zM353 230h3v3h-3zM362 235h3v3h-3zM367 235h3v3h-3zM372 234h3v3h-3zM367 240h3v3h-3z"/>
<path fill="#c8f000" d="M456 380h3v3h-3zM462 400h3v3h-3zM452 388h3v3h-3zM455 390h3v3h-3zM455 388h3v3h-3zM464 397h3v3h-3zM455 366h3v3h-3zM449 384h3v3h-3zM466 391h3v3h-3zM451 385h3v3h-3zM462 378h3v3h-3zM465 387h3v3h-3zM459 384h3v3h-3zM459 384h3v3h-3zM456 385h3v3h-3zM464 394h3v3h-3zM451 386h3v3h-3zM464 385h3v3h-3zM465 394h3v3h-3z"/>
<path fill="#10e0e0" d="M403 134h3v3h-3zM395 137h3v3h-3zM405 138h3v3h-3zM402 140h3v3h-3zM408 145h3v3h-3zM402 150h3v3h-3zM405 151h3v3h-3zM406 153h3v3h-3zM409 154h3v3h-3zM408 158h3v3h-3zM398 161h3v3h-3zM402 163h3v3h-3zM406 164h3v3h-3zM406 168h3v3h-3zM404 171h3v3h-3zM402 172h3v3h-3zM407 177h3v3h-3zM403 179h3v3h-3zM405 184h3v3h-3zM411 188h3v3h-3zM409 189h3v3h-3zM405 193h3v3h-3zM414 192h3v3h-3zM409 198h3v3h-3zM417 199h3v3h-3zM410 203h3v3h-3zM414 204h3v3h-3zM412 206h3v3h-3zM416 207h3v3h-3zM414 208h3v3h-3zM421 209h3v3h-3zM411 215h3v3h-3zM414 216h3v3h-3zM418 224h3v3h-3zM423 224h3v3h-3zM418 227h3v3h-3zM416 232h3v3h-3zM414 235h3v3h-3zM417 243h3v3h-3zM416 245h3v3h-3zM428 243h3v3h-3zM418 250h3v3h-3zM428 249h3v3h-3zM422 253h3v3h-3zM422 254h3v3h-3zM430 254h3v3h-3zM426 259h3v3h-3zM431 259h3v3h-3zM430 264h3v3h-3zM430 265h3v3h-3z"/>
<path fill="#00e890" d="M404 142h3v3h-3zM400 145h3v3h-3zM399 148h3v3h-3zM398 158h3v3h-3zM403 166h3v3h-3zM405 174h3v3h-3zM407 175h3v3h-3zM404 182h3v3h-3zM401 183h3v3h-3zM412 185h3v3h-3zM412 198h3v3h-3zM416 213h3v3h-3zM423 218h3v3h-3zM423 221h3v3h-3zM415 233h3v3h-3zM417 236h3v3h-3zM419 240h3v3h-3zM420 248h3v3h-3zM428 263h3v3h-3zM427 269h3v3h-3zM401 33h3v3h-3zM401 36h3v3h-3zM402 37h3v3h-3zM403 41h3v3h-3zM404 44h3v3h-3zM405 47h3v3h-3zM405 49h3v3h-3zM405 52h3v3h-3zM406 54h3v3h-3zM415 0h3v3h-3zM415 3h3v3h-3zM415 6h3v3h-3zM415 8h3v3h-3zM417 24h3v3h-3zM585 11h3v3h-3zM584 17h3v3h-3zM583 21h3v3h-3zM583 24h3v3h-3zM582 26h3v3h-3zM582 31h3v3h-3zM581 35h3v3h-3zM580 37h3v3h-3zM560 113h3v3h-3zM560 117h3v3h-3zM559 119h3v3h-3zM560 121h3v3h-3zM559 124h3v3h-3zM558 126h3v3h-3zM884 198h3v3h-3zM887 195h3v3h-3zM888 193h3v3h-3zM893 191h3v3h-3zM895 190h3v3h-3z"/>
<path fill="#00d8c0" d="M405 197h3v3h-3zM421 217h3v3h-3zM417 229h3v3h-3zM423 237h3v3h-3zM422 259h3v3h-3z"/>
<path fill="#ee00ee" d="M429 255h3v3h-3zM430 258h3v3h-3zM429 260h3v3h-3zM429 261h3v3h-3zM107 413h3v3h-3zM107 411h3v3h-3zM101 410h3v3h-3zM109 408h3v3h-3zM104 404h3v3h-3zM95 418h3v3h-3zM107 411h3v3h-3zM97 407h3v3h-3zM98 409h3v3h-3zM104 404h3v3h-3zM94 412h3v3h-3zM101 401h3v3h-3zM97 412h3v3h-3zM101 410h3v3h-3zM100 409h3v3h-3zM93 414h3v3h-3zM91 409h3v3h-3zM102 405h3v3h-3zM101 409h3v3h-3zM103 408h3v3h-3zM93 417h3v3h-3zM94 409h3v3h-3zM105 409h3v3h-3zM101 418h3v3h-3zM95 406h3v3h-3zM93 410h3v3h-3zM106 409h3v3h-3zM103 416h3v3h-3zM96 406h3v3h-3zM103 411h3v3h-3zM101 414h3v3h-3zM105 411h3v3h-3zM103 407h3v3h-3zM97 406h3v3h-3zM102 408h3v3h-3zM100 411h3v3h-3zM104 421h3v3h-3zM102 416h3v3h-3zM103 409h3v3h-3zM104 412h3v3h-3zM98 413h3v3h-3zM104 409h3v3h-3zM102 412h3v3h-3zM95 409h3v3h-3zM102 409h3v3h-3zM100 410h3v3h-3zM103 411h3v3h-3zM105 407h3v3h-3zM97 407h3v3h-3zM101 415h3v3h-3zM98 407h3v3h-3zM91 415h3v3h-3zM91 415h3v3h-3zM91 413h3v3h-3zM101 414h3v3h-3zM97 421h3v3h-3zM97 405h3v3h-3zM102 405h3v3h-3zM96 404h3v3h-3zM93 409h3v3h-3zM113 405h3v3h-3zM119 405h3v3h-3zM123 405h3v3h-3z"/>
<path fill="#20f000" d="M118 320h3v3h-3zM116 355h3v3h-3zM115 289h3v3h-3zM116 283h3v3h-3zM117 333h3v3h-3zM121 326h3v3h-3zM121 292h3v3h-3zM112 311h3v3h-3zM118 321h3v3h-3zM105 369h3v3h-3zM109 360h3v3h-3zM119 314h3v3h-3zM114 319h3v3h-3zM113 359h3v3h-3zM108 325h3v3h-3zM116 317h3v3h-3zM116 275h3v3h-3zM111 357h3v3h-3zM111 310h3v3h-3zM119 316h3v3h-3zM112 358h3v3h-3zM113 285h3v3h-3zM112 308h3v3h-3zM114 297h3v3h-3zM113 330h3v3h-3zM113 273h3v3h-3zM112 320h3v3h-3zM112 340h3v3h-3zM111 287h3v3h-3zM118 293h3v3h-3zM108 304h3v3h-3zM120 306h3v3h-3zM112 327h3v3h-3zM109 284h3v3h-3zM110 294h3v3h-3zM118 305h3v3h-3zM116 282h3v3h-3zM115 356h3v3h-3zM120 275h3v3h-3zM111 311h3v3h-3zM118 314h3v3h-3zM110 365h3v3h-3zM114 373h3v3h-3zM113 359h3v3h-3zM111 325h3v3h-3zM115 358h3v3h-3zM116 289h3v3h-3zM117 363h3v3h-3zM121 299h3v3h-3zM110 307h3v3h-3zM109 319h3v3h-3zM119 295h3v3h-3zM117 373h3v3h-3zM117 316h3v3h-3zM120 289h3v3h-3zM122 282h3v3h-3zM115 321h3v3h-3zM117 299h3v3h-3zM120 282h3v3h-3zM116 328h3v3h-3zM115 364h3v3h-3zM116 366h3v3h-3zM109 289h3v3h-3zM120 329h3v3h-3zM117 377h3v3h-3zM119 324h3v3h-3zM120 300h3v3h-3zM119 371h3v3h-3zM115 360h3v3h-3zM111 362h3v3h-3zM122 324h3v3h-3zM115 275h3v3h-3zM117 316h3v3h-3zM117 283h3v3h-3zM116 372h3v3h-3zM112 375h3v3h-3zM119 352h3v3h-3zM121 314h3v3h-3zM122 304h3v3h-3zM110 326h3v3h-3zM113 324h3v3h-3zM119 314h3v3h-3zM115 364h3v3h-3zM115 315h3v3h-3zM116 370h3v3h-3zM119 295h3v3h-3zM116 311h3v3h-3zM112 321h3v3h-3zM117 305h3v3h-3zM120 285h3v3h-3zM119 288h3v3h-3zM118 318h3v3h-3zM120 371h3v3h-3zM114 354h3v3h-3zM116 375h3v3h-3zM118 298h3v3h-3zM116 293h3v3h-3zM117 379h3v3h-3zM113 327h3v3h-3zM117 367h3v3h-3zM114 307h3v3h-3zM111 276h3v3h-3zM111 306h3v3h-3zM119 369h3v3h-3zM119 367h3v3h-3zM113 288h3v3h-3zM115 321h3v3h-3zM118 278h3v3h-3zM115 376h3v3h-3zM118 329h3v3h-3zM118 326h3v3h-3zM108 288h3v3h-3zM114 354h3v3h-3zM117 356h3v3h-3zM114 376h3v3h-3zM118 299h3v3h-3zM119 305h3v3h-3zM116 366h3v3h-3zM118 284h3v3h-3zM115 296h3v3h-3zM111 325h3v3h-3zM115 300h3v3h-3zM110 354h3v3h-3zM112 309h3v3h-3zM119 310h3v3h-3zM114 375h3v3h-3zM115 289h3v3h-3zM117 300h3v3h-3zM116 329h3v3h-3zM118 295h3v3h-3zM111 274h3v3h-3zM107 301h3v3h-3zM117 360h3v3h-3zM115 305h3v3h-3zM118 313h3v3h-3zM108 325h3v3h-3zM114 361h3v3h-3zM112 332h3v3h-3zM121 307h3v3h-3zM110 363h3v3h-3zM115 292h3v3h-3zM119 344h3v3h-3zM118 314h3v3h-3zM114 368h3v3h-3zM114 371h3v3h-3z"/>
<path fill="#b8e800" d="M109 347h3v3h-3zM118 332h3v3h-3zM114 335h3v3h-3zM119 331h3v3h-3zM118 352h3v3h-3zM109 333h3v3h-3zM111 341h3v3h-3zM114 341h3v3h-3zM116 347h3v3h-3zM118 342h3v3h-3zM118 334h3v3h-3zM108 334h3v3h-3zM106 343h3v3h-3zM108 338h3v3h-3zM115 346h3v3h-3zM114 334h3v3h-3zM115 346h3v3h-3zM112 336h3v3h-3zM121 347h3v3h-3zM119 352h3v3h-3zM118 352h3v3h-3zM112 336h3v3h-3zM115 348h3v3h-3zM112 344h3v3h-3zM112 333h3v3h-3zM109 342h3v3h-3zM116 349h3v3h-3zM114 340h3v3h-3zM120 342h3v3h-3zM114 346h3v3h-3zM120 343h3v3h-3zM118 337h3v3h-3zM110 346h3v3h-3zM109 347h3v3h-3zM115 353h3v3h-3zM114 350h3v3h-3zM117 331h3v3h-3zM108 335h3v3h-3zM115 352h3v3h-3zM118 342h3v3h-3zM118 339h3v3h-3zM112 331h3v3h-3zM110 350h3v3h-3zM118 351h3v3h-3zM120 353h3v3h-3zM111 352h3v3h-3zM114 331h3v3h-3zM119 332h3v3h-3zM111 339h3v3h-3z"/>
<path fill="#e8f000" d="M123 276h3v3h-3zM119 276h3v3h-3zM118 275h3v3h-3zM117 279h3v3h-3zM119 273h3v3h-3zM121 276h3v3h-3zM118 279h3v3h-3zM123 276h3v3h-3zM117 275h3v3h-3zM123 276h3v3h-3zM92 555h3v3h-3zM94 554h3v3h-3zM94 551h3v3h-3zM83 551h3v3h-3zM99 551h3v3h-3zM91 553h3v3h-3zM85 553h3v3h-3zM357 524h3v3h-3zM358 523h3v3h-3zM359 521h3v3h-3zM361 522h3v3h-3zM362 522h3v3h-3zM363 527h3v3h-3zM365 527h3v3h-3zM367 527h3v3h-3zM367 525h3v3h-3zM369 526h3v3h-3zM371 526h3v3h-3zM357 533h3v3h-3zM351 525h3v3h-3zM373 515h3v3h-3zM375 514h3v3h-3zM379 513h3v3h-3zM388 508h3v3h-3zM391 508h3v3h-3zM403 504h3v3h-3zM404 502h3v3h-3zM412 497h3v3h-3zM416 497h3v3h-3zM426 531h3v3h-3zM426 529h3v3h-3zM429 528h3v3h-3zM430 526h3v3h-3zM408 545h3v3h-3zM411 544h3v3h-3zM413 542h3v3h-3zM413 540h3v3h-3zM415 538h3v3h-3zM704 667h3v3h-3zM725 664h3v3h-3zM707 676h3v3h-3zM720 669h3v3h-3zM718 665h3v3h-3zM731 670h3v3h-3zM721 671h3v3h-3zM714 670h3v3h-3zM728 667h3v3h-3zM716 666h3v3h-3zM713 677h3v3h-3zM716 674h3v3h-3zM717 675h3v3h-3zM714 672h3v3h-3zM711 673h3v3h-3zM714 669h3v3h-3zM707 668h3v3h-3zM712 675h3v3h-3zM711 668h3v3h-3zM708 674h3v3h-3zM702 671h3v3h-3zM730 667h3v3h-3zM707 676h3v3h-3zM715 673h3v3h-3zM733 662h3v3h-3zM722 676h3v3h-3zM711 670h3v3h-3zM728 677h3v3h-3zM730 667h3v3h-3zM698 671h3v3h-3zM730 669h3v3h-3zM716 672h3v3h-3zM701 674h3v3h-3zM713 673h3v3h-3zM710 662h3v3h-3zM715 666h3v3h-3zM711 678h3v3h-3zM729 670h3v3h-3zM706 667h3v3h-3zM710 678h3v3h-3zM711 666h3v3h-3zM716 667h3v3h-3zM713 677h3v3h-3zM707 672h3v3h-3zM697 671h3v3h-3zM700 668h3v3h-3zM717 673h3v3h-3zM722 674h3v3h-3zM703 664h3v3h-3zM764 655h3v3h-3zM751 651h3v3h-3zM738 646h3v3h-3zM736 654h3v3h-3zM756 647h3v3h-3zM743 654h3v3h-3zM755 651h3v3h-3zM740 659h3v3h-3zM735 655h3v3h-3zM746 647h3v3h-3zM748 661h3v3h-3zM730 653h3v3h-3zM748 647h3v3h-3zM729 654h3v3h-3zM740 654h3v3h-3zM745 660h3v3h-3zM741 654h3v3h-3zM752 650h3v3h-3zM745 651h3v3h-3zM755 653h3v3h-3zM755 661h3v3h-3zM746 654h3v3h-3zM743 651h3v3h-3zM726 650h3v3h-3zM750 644h3v3h-3zM838 661h3v3h-3zM843 663h3v3h-3zM846 666h3v3h-3zM849 666h3v3h-3zM852 669h3v3h-3zM856 670h3v3h-3zM858 672h3v3h-3zM863 673h3v3h-3zM866 675h3v3h-3zM869 676h3v3h-3z"/>
<path fill="#40f000" d="M107 504h3v3h-3zM94 497h3v3h-3zM106 480h3v3h-3zM109 497h3v3h-3zM95 510h3v3h-3zM97 497h3v3h-3zM109 495h3v3h-3zM105 479h3v3h-3zM101 479h3v3h-3z"/>
<path fill="#1030ff" d="M113 544h3v3h-3zM100 549h3v3h-3zM98 542h3v3h-3zM113 544h3v3h-3zM111 544h3v3h-3zM107 542h3v3h-3zM109 549h3v3h-3zM105 549h3v3h-3zM105 548h3v3h-3zM103 546h3v3h-3zM109 543h3v3h-3zM111 543h3v3h-3zM891 608h3v3h-3zM879 609h3v3h-3zM886 611h3v3h-3zM891 610h3v3h-3zM880 613h3v3h-3zM885 609h3v3h-3zM886 611h3v3h-3zM898 608h3v3h-3zM883 608h3v3h-3zM898 608h3v3h-3z"/>
<path fill="#c0f000" d="M126 566h3v3h-3zM133 567h3v3h-3zM167 569h3v3h-3zM238 555h3v3h-3zM298 553h3v3h-3zM315 548h3v3h-3z"/>
<path fill="#10e840" d="M260 497h3v3h-3zM262 497h3v3h-3zM265 498h3v3h-3zM268 498h3v3h-3zM271 496h3v3h-3zM274 496h3v3h-3zM276 496h3v3h-3zM279 495h3v3h-3zM282 495h3v3h-3zM285 495h3v3h-3zM287 496h3v3h-3zM289 494h3v3h-3zM293 495h3v3h-3zM295 495h3v3h-3z"/>
<path fill="#20ff00" d="M309 586h3v3h-3zM298 581h3v3h-3zM304 570h3v3h-3zM307 579h3v3h-3zM291 583h3v3h-3zM296 587h3v3h-3zM298 589h3v3h-3zM302 587h3v3h-3zM294 580h3v3h-3zM299 589h3v3h-3zM297 581h3v3h-3zM295 583h3v3h-3zM297 570h3v3h-3zM304 570h3v3h-3zM305 587h3v3h-3zM311 590h3v3h-3zM296 578h3v3h-3zM296 588h3v3h-3zM293 575h3v3h-3zM309 584h3v3h-3zM298 585h3v3h-3zM298 570h3v3h-3zM296 575h3v3h-3zM299 578h3v3h-3zM293 586h3v3h-3zM298 577h3v3h-3zM308 580h3v3h-3zM298 578h3v3h-3zM311 597h3v3h-3zM308 596h3v3h-3zM307 600h3v3h-3zM309 599h3v3h-3zM311 591h3v3h-3zM306 609h3v3h-3zM318 607h3v3h-3zM308 606h3v3h-3zM318 604h3v3h-3zM309 590h3v3h-3zM308 594h3v3h-3zM306 606h3v3h-3zM310 608h3v3h-3zM318 605h3v3h-3zM303 598h3v3h-3zM302 601h3v3h-3zM315 607h3v3h-3zM318 608h3v3h-3zM305 609h3v3h-3zM312 589h3v3h-3zM312 614h3v3h-3zM310 613h3v3h-3zM314 592h3v3h-3zM320 595h3v3h-3zM306 613h3v3h-3zM307 606h3v3h-3zM315 594h3v3h-3zM305 613h3v3h-3zM317 599h3v3h-3zM316 590h3v3h-3zM316 590h3v3h-3zM309 611h3v3h-3zM315 603h3v3h-3zM309 607h3v3h-3zM316 602h3v3h-3zM316 599h3v3h-3zM308 596h3v3h-3zM316 601h3v3h-3zM320 593h3v3h-3zM316 593h3v3h-3zM303 611h3v3h-3zM308 609h3v3h-3zM315 592h3v3h-3zM321 602h3v3h-3zM304 608h3v3h-3zM315 609h3v3h-3zM309 613h3v3h-3zM309 593h3v3h-3zM307 609h3v3h-3zM301 610h3v3h-3zM302 605h3v3h-3zM314 591h3v3h-3zM313 596h3v3h-3zM308 603h3v3h-3zM307 594h3v3h-3zM317 587h3v3h-3zM319 592h3v3h-3zM313 592h3v3h-3zM301 606h3v3h-3z"/>
 <g transform="translate(-365,-61)">
  <rect x="407" y="523" width="448" height="14" fill="url(#gg)"/>
  <rect x="848" y="83" width="14" height="446" fill="url(#rg)"/>
  <circle cx="855" cy="529" r="11" fill="#0000ff"/>
 </g>
</svg>
</div>
<div class="abs" style="left:0;top:999px;width:1301px;height:6px;background:#efece8"></div>
<div class="abs" style="left:0;top:1005px;width:1301px;height:1px;background:#b5b1ac"></div>
<div class="abs" style="left:673px;top:1000px;width:18px;height:3px;background-image:radial-gradient(circle at 1.5px 1.5px,#9a9692 0.8px,transparent 0.9px);background-size:3px 3px"></div>
</body></html>
